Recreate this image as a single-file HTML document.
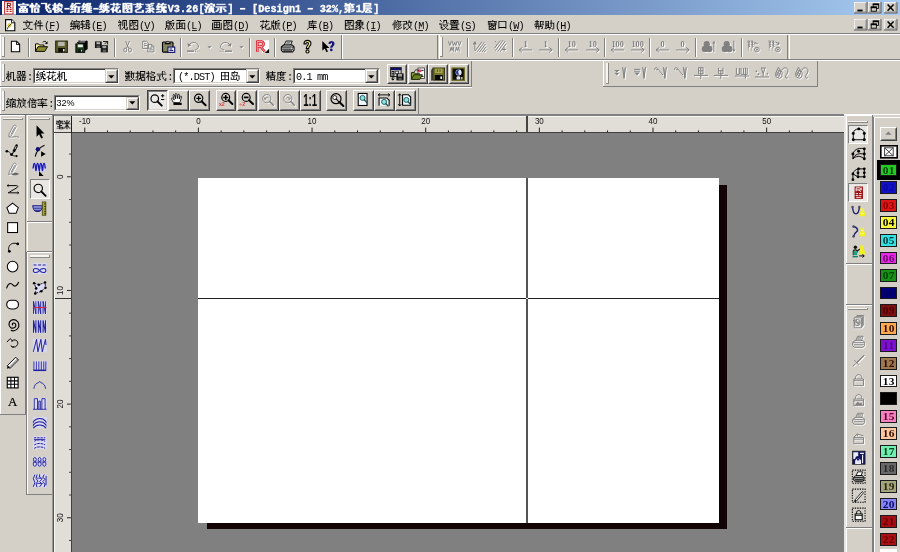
<!DOCTYPE html>
<html lang="zh"><head><meta charset="utf-8"><title>富怡飞梭-绗缝-绣花图艺系统V3.26</title>
<style>
html,body{margin:0;padding:0;background:#d4d0c8;}
body{width:900px;height:552px;overflow:hidden;position:relative;font-family:"Liberation Sans",sans-serif;}
#app{filter:blur(0.5px);position:absolute;left:0;top:0;width:900px;height:552px;overflow:hidden;}
#app div,#app svg{position:absolute;}
svg.tx{overflow:visible;font-family:"Liberation Mono",monospace;font-size:11.6px;}
svg{overflow:visible}
.lb{font-family:"Liberation Sans",sans-serif;color:#000;white-space:nowrap;line-height:1.15}
.sw{font-family:"Liberation Serif",serif;font-weight:bold;font-size:11.4px;line-height:11.6px;text-align:center;letter-spacing:0.3px}

svg.ic .s{fill:none;stroke:currentColor;stroke-width:1}
svg.ic .f{fill:currentColor;stroke:none}
</style></head>
<body>
<svg width="0" height="0" style="position:absolute"><defs>
<path id="b5bcc" d="M5 0h2v1h-2zM0 1h12v1h-12zM0 2h2v1h-2zM10 2h2v1h-2zM2 3h8v1h-8zM3 4h6v1h-6zM3 5h2v1h-2zM7 5h2v1h-2zM1 6h10v1h-10zM1 7h2v1h-2zM5 7h2v1h-2zM9 7h2v1h-2zM1 8h10v1h-10zM1 9h2v1h-2zM5 9h2v1h-2zM9 9h2v1h-2zM1 10h10v1h-10z"/>
<path id="b6021" d="M2 0h2v1h-2zM7 0h2v1h-2zM2 1h2v1h-2zM7 1h2v1h-2zM0 2h5v1h-5zM6 2h2v1h-2zM9 2h2v1h-2zM0 3h7v1h-7zM10 3h2v1h-2zM0 4h12v1h-12zM2 5h2v1h-2zM2 6h2v1h-2zM5 6h6v1h-6zM2 7h2v1h-2zM5 7h2v1h-2zM9 7h2v1h-2zM2 8h2v1h-2zM5 8h2v1h-2zM9 8h2v1h-2zM2 9h2v1h-2zM5 9h2v1h-2zM9 9h2v1h-2zM2 10h2v1h-2zM5 10h6v1h-6z"/>
<path id="b98de" d="M0 0h7v1h-7zM5 1h2v1h-2zM9 1h2v1h-2zM5 2h2v1h-2zM8 2h2v1h-2zM5 3h4v1h-4zM5 4h4v1h-4zM5 5h2v1h-2zM8 5h2v1h-2zM5 6h2v1h-2zM9 6h2v1h-2zM6 7h2v1h-2zM6 8h2v1h-2zM10 8h2v1h-2zM7 9h2v1h-2zM10 9h2v1h-2zM8 10h4v1h-4z"/>
<path id="b68ad" d="M2 0h2v1h-2zM7 0h2v1h-2zM2 1h2v1h-2zM6 1h2v1h-2zM9 1h2v1h-2zM0 2h12v1h-12zM2 3h2v1h-2zM6 3h2v1h-2zM9 3h2v1h-2zM1 4h6v1h-6zM10 4h2v1h-2zM1 5h7v1h-7zM0 6h4v1h-4zM6 6h5v1h-5zM0 7h4v1h-4zM5 7h3v1h-3zM9 7h2v1h-2zM2 8h4v1h-4zM7 8h3v1h-3zM2 9h2v1h-2zM6 9h2v1h-2zM9 9h2v1h-2zM2 10h5v1h-5zM10 10h2v1h-2z"/>
<path id="b7ed7" d="M2 0h2v1h-2zM6 0h6v1h-6zM2 1h2v1h-2zM5 1h2v1h-2zM1 2h2v1h-2zM4 2h2v1h-2zM1 3h4v1h-4zM6 3h2v1h-2zM0 4h4v1h-4zM5 4h7v1h-7zM2 5h5v1h-5zM9 5h2v1h-2zM1 6h2v1h-2zM5 6h2v1h-2zM9 6h2v1h-2zM0 7h7v1h-7zM9 7h2v1h-2zM5 8h2v1h-2zM9 8h2v1h-2zM2 9h5v1h-5zM9 9h2v1h-2zM0 10h3v1h-3zM5 10h2v1h-2zM8 10h3v1h-3z"/>
<path id="b7f1d" d="M2 0h2v1h-2zM6 0h5v1h-5zM2 1h6v1h-6zM9 1h2v1h-2zM1 2h2v1h-2zM4 2h6v1h-6zM1 3h4v1h-4zM6 3h2v1h-2zM9 3h2v1h-2zM0 4h12v1h-12zM2 5h2v1h-2zM5 5h2v1h-2zM8 5h2v1h-2zM1 6h2v1h-2zM5 6h7v1h-7zM0 7h7v1h-7zM8 7h2v1h-2zM5 8h7v1h-7zM2 9h5v1h-5zM8 9h2v1h-2zM0 10h3v1h-3zM6 10h6v1h-6z"/>
<path id="b7ee3" d="M2 0h2v1h-2zM8 0h3v1h-3zM2 1h2v1h-2zM5 1h4v1h-4zM1 2h2v1h-2zM4 2h2v1h-2zM7 2h2v1h-2zM1 3h11v1h-11zM0 4h4v1h-4zM5 4h6v1h-6zM2 5h4v1h-4zM7 5h2v1h-2zM10 5h2v1h-2zM1 6h2v1h-2zM5 6h5v1h-5zM0 7h5v1h-5zM6 7h4v1h-4zM4 8h8v1h-8zM2 9h5v1h-5zM10 9h2v1h-2zM0 10h3v1h-3zM4 10h2v1h-2zM8 10h3v1h-3z"/>
<path id="b82b1" d="M3 0h2v1h-2zM7 0h2v1h-2zM0 1h12v1h-12zM3 2h2v1h-2zM7 2h2v1h-2zM3 4h2v1h-2zM6 4h2v1h-2zM9 4h2v1h-2zM2 5h2v1h-2zM6 5h4v1h-4zM1 6h3v1h-3zM6 6h3v1h-3zM0 7h4v1h-4zM5 7h3v1h-3zM2 8h6v1h-6zM10 8h2v1h-2zM2 9h2v1h-2zM6 9h2v1h-2zM10 9h2v1h-2zM2 10h2v1h-2zM7 10h5v1h-5z"/>
<path id="b56fe" d="M1 0h11v1h-11zM1 1h2v1h-2zM4 1h2v1h-2zM10 1h2v1h-2zM1 2h2v1h-2zM4 2h8v1h-8zM1 3h5v1h-5zM7 3h2v1h-2zM10 3h2v1h-2zM1 4h3v1h-3zM5 4h3v1h-3zM10 4h2v1h-2zM1 5h2v1h-2zM4 5h2v1h-2zM7 5h2v1h-2zM10 5h2v1h-2zM1 6h6v1h-6zM8 6h4v1h-4zM1 7h2v1h-2zM6 7h2v1h-2zM10 7h2v1h-2zM1 8h2v1h-2zM5 8h2v1h-2zM10 8h2v1h-2zM1 9h2v1h-2zM6 9h2v1h-2zM10 9h2v1h-2zM1 10h11v1h-11z"/>
<path id="b827a" d="M4 0h2v1h-2zM7 0h2v1h-2zM0 1h12v1h-12zM4 2h2v1h-2zM7 2h2v1h-2zM4 3h2v1h-2zM7 3h2v1h-2zM2 4h8v1h-8zM7 5h2v1h-2zM5 6h3v1h-3zM3 7h3v1h-3zM2 8h2v1h-2zM10 8h2v1h-2zM2 9h2v1h-2zM10 9h2v1h-2zM3 10h9v1h-9z"/>
<path id="b7cfb" d="M7 0h4v1h-4zM1 1h7v1h-7zM4 2h2v1h-2zM8 2h2v1h-2zM2 3h7v1h-7zM5 4h2v1h-2zM4 5h2v1h-2zM8 5h2v1h-2zM1 6h10v1h-10zM5 7h2v1h-2zM9 7h2v1h-2zM3 8h6v1h-6zM2 9h2v1h-2zM5 9h2v1h-2zM8 9h2v1h-2zM1 10h2v1h-2zM4 10h3v1h-3zM9 10h2v1h-2z"/>
<path id="b7edf" d="M2 0h2v1h-2zM7 0h2v1h-2zM2 1h10v1h-10zM1 2h2v1h-2zM6 2h2v1h-2zM1 3h6v1h-6zM9 3h2v1h-2zM0 4h12v1h-12zM2 5h2v1h-2zM6 5h6v1h-6zM1 6h2v1h-2zM6 6h4v1h-4zM0 7h5v1h-5zM6 7h4v1h-4zM6 8h6v1h-6zM2 9h5v1h-5zM8 9h4v1h-4zM0 10h3v1h-3zM4 10h2v1h-2zM8 10h4v1h-4z"/>
<path id="b6f14" d="M1 0h2v1h-2zM7 0h2v1h-2zM2 1h10v1h-10zM4 2h2v1h-2zM10 2h2v1h-2zM0 3h2v1h-2zM3 3h9v1h-9zM1 4h4v1h-4zM7 4h2v1h-2zM2 5h2v1h-2zM5 5h6v1h-6zM2 6h2v1h-2zM5 6h6v1h-6zM0 7h3v1h-3zM5 7h6v1h-6zM1 8h2v1h-2zM5 8h6v1h-6zM1 9h2v1h-2zM5 9h6v1h-6zM1 10h2v1h-2zM4 10h3v1h-3zM9 10h3v1h-3z"/>
<path id="b793a" d="M1 1h10v1h-10zM0 4h12v1h-12zM5 5h2v1h-2zM2 6h2v1h-2zM5 6h2v1h-2zM8 6h2v1h-2zM2 7h2v1h-2zM5 7h2v1h-2zM9 7h2v1h-2zM1 8h2v1h-2zM5 8h2v1h-2zM10 8h2v1h-2zM0 9h2v1h-2zM5 9h2v1h-2zM10 9h2v1h-2zM4 10h3v1h-3z"/>
<path id="b7b2c" d="M1 0h2v1h-2zM6 0h2v1h-2zM1 1h11v1h-11zM1 2h6v1h-6zM8 2h2v1h-2zM0 3h11v1h-11zM5 4h2v1h-2zM9 4h2v1h-2zM1 5h10v1h-10zM1 6h2v1h-2zM5 6h2v1h-2zM1 7h11v1h-11zM3 8h4v1h-4zM10 8h2v1h-2zM2 9h2v1h-2zM5 9h2v1h-2zM8 9h3v1h-3zM0 10h3v1h-3zM5 10h2v1h-2z"/>
<path id="b5c42" d="M2 0h9v1h-9zM2 1h2v1h-2zM9 1h2v1h-2zM2 2h9v1h-9zM2 3h2v1h-2zM2 4h9v1h-9zM2 5h2v1h-2zM2 6h10v1h-10zM2 7h2v1h-2zM6 7h2v1h-2zM2 8h2v1h-2zM5 8h2v1h-2zM8 8h2v1h-2zM1 9h2v1h-2zM4 9h2v1h-2zM9 9h2v1h-2zM0 10h2v1h-2zM4 10h8v1h-8z"/>
<path id="g6587" d="M4 0h1v1h-1zM5 1h1v1h-1zM0 2h11v1h-11zM3 3h1v1h-1zM7 3h1v1h-1zM3 4h1v1h-1zM7 4h1v1h-1zM3 5h1v1h-1zM7 5h1v1h-1zM4 6h1v1h-1zM6 6h1v1h-1zM4 7h1v1h-1zM6 7h1v1h-1zM5 8h1v1h-1zM3 9h2v1h-2zM6 9h2v1h-2zM0 10h3v1h-3zM8 10h3v1h-3z"/>
<path id="g4ef6" d="M3 0h1v1h-1zM7 0h1v1h-1zM3 1h1v1h-1zM5 1h1v1h-1zM7 1h1v1h-1zM2 2h1v1h-1zM5 2h1v1h-1zM7 2h1v1h-1zM2 3h1v1h-1zM4 3h6v1h-6zM1 4h3v1h-3zM7 4h1v1h-1zM0 5h1v1h-1zM2 5h1v1h-1zM7 5h1v1h-1zM2 6h1v1h-1zM4 6h7v1h-7zM2 7h1v1h-1zM7 7h1v1h-1zM2 8h1v1h-1zM7 8h1v1h-1zM2 9h1v1h-1zM7 9h1v1h-1zM2 10h1v1h-1zM7 10h1v1h-1z"/>
<path id="g7f16" d="M2 0h1v1h-1zM7 0h1v1h-1zM2 1h1v1h-1zM4 1h7v1h-7zM1 2h1v1h-1zM4 2h1v1h-1zM10 2h1v1h-1zM1 3h1v1h-1zM3 3h8v1h-8zM0 4h3v1h-3zM4 4h1v1h-1zM2 5h1v1h-1zM4 5h7v1h-7zM1 6h1v1h-1zM4 6h1v1h-1zM6 6h1v1h-1zM8 6h1v1h-1zM10 6h1v1h-1zM0 7h11v1h-11zM4 8h1v1h-1zM6 8h1v1h-1zM8 8h1v1h-1zM10 8h1v1h-1zM2 9h3v1h-3zM6 9h1v1h-1zM8 9h1v1h-1zM10 9h1v1h-1zM0 10h2v1h-2zM4 10h1v1h-1zM9 10h2v1h-2z"/>
<path id="g8f91" d="M2 0h1v1h-1zM6 0h4v1h-4zM0 1h5v1h-5zM6 1h1v1h-1zM9 1h1v1h-1zM1 2h1v1h-1zM6 2h4v1h-4zM1 3h2v1h-2zM0 4h1v1h-1zM2 4h1v1h-1zM5 4h6v1h-6zM0 5h5v1h-5zM6 5h1v1h-1zM9 5h1v1h-1zM2 6h1v1h-1zM6 6h2v1h-2zM9 6h1v1h-1zM2 7h3v1h-3zM6 7h1v1h-1zM8 7h2v1h-2zM0 8h3v1h-3zM6 8h1v1h-1zM9 8h2v1h-2zM2 9h1v1h-1zM4 9h6v1h-6zM2 10h1v1h-1zM9 10h1v1h-1z"/>
<path id="g89c6" d="M1 0h1v1h-1zM5 0h5v1h-5zM2 1h1v1h-1zM5 1h1v1h-1zM9 1h1v1h-1zM0 2h4v1h-4zM5 2h1v1h-1zM7 2h1v1h-1zM9 2h1v1h-1zM3 3h1v1h-1zM5 3h1v1h-1zM7 3h1v1h-1zM9 3h1v1h-1zM2 4h1v1h-1zM5 4h1v1h-1zM7 4h1v1h-1zM9 4h1v1h-1zM1 5h3v1h-3zM5 5h1v1h-1zM7 5h1v1h-1zM9 5h1v1h-1zM0 6h1v1h-1zM2 6h1v1h-1zM5 6h1v1h-1zM7 6h1v1h-1zM9 6h1v1h-1zM2 7h1v1h-1zM7 7h1v1h-1zM2 8h1v1h-1zM6 8h2v1h-2zM10 8h1v1h-1zM2 9h1v1h-1zM5 9h1v1h-1zM7 9h1v1h-1zM10 9h1v1h-1zM2 10h1v1h-1zM4 10h1v1h-1zM8 10h3v1h-3z"/>
<path id="g56fe" d="M1 0h10v1h-10zM1 1h1v1h-1zM4 1h1v1h-1zM10 1h1v1h-1zM1 2h1v1h-1zM4 2h5v1h-5zM10 2h1v1h-1zM1 3h1v1h-1zM3 3h2v1h-2zM7 3h1v1h-1zM10 3h1v1h-1zM1 4h2v1h-2zM5 4h2v1h-2zM10 4h1v1h-1zM1 5h1v1h-1zM4 5h1v1h-1zM7 5h1v1h-1zM10 5h1v1h-1zM1 6h3v1h-3zM5 6h1v1h-1zM8 6h3v1h-3zM1 7h1v1h-1zM6 7h1v1h-1zM10 7h1v1h-1zM1 8h1v1h-1zM5 8h1v1h-1zM10 8h1v1h-1zM1 9h1v1h-1zM6 9h1v1h-1zM10 9h1v1h-1zM1 10h10v1h-10z"/>
<path id="g7248" d="M3 0h1v1h-1zM8 0h2v1h-2zM1 1h1v1h-1zM3 1h1v1h-1zM5 1h3v1h-3zM1 2h1v1h-1zM3 2h1v1h-1zM5 2h1v1h-1zM1 3h10v1h-10zM1 4h1v1h-1zM5 4h2v1h-2zM9 4h1v1h-1zM1 5h1v1h-1zM5 5h1v1h-1zM7 5h1v1h-1zM9 5h1v1h-1zM1 6h3v1h-3zM5 6h1v1h-1zM7 6h1v1h-1zM9 6h1v1h-1zM1 7h1v1h-1zM3 7h1v1h-1zM5 7h1v1h-1zM8 7h1v1h-1zM1 8h1v1h-1zM3 8h1v1h-1zM5 8h1v1h-1zM8 8h1v1h-1zM0 9h1v1h-1zM3 9h1v1h-1zM5 9h1v1h-1zM7 9h1v1h-1zM9 9h1v1h-1zM0 10h1v1h-1zM3 10h2v1h-2zM6 10h1v1h-1zM10 10h1v1h-1z"/>
<path id="g9762" d="M1 0h10v1h-10zM5 1h1v1h-1zM4 2h1v1h-1zM1 3h10v1h-10zM1 4h1v1h-1zM4 4h1v1h-1zM7 4h1v1h-1zM10 4h1v1h-1zM1 5h1v1h-1zM4 5h4v1h-4zM10 5h1v1h-1zM1 6h1v1h-1zM4 6h1v1h-1zM7 6h1v1h-1zM10 6h1v1h-1zM1 7h1v1h-1zM4 7h4v1h-4zM10 7h1v1h-1zM1 8h1v1h-1zM4 8h1v1h-1zM7 8h1v1h-1zM10 8h1v1h-1zM1 9h10v1h-10zM1 10h1v1h-1zM10 10h1v1h-1z"/>
<path id="g753b" d="M0 0h11v1h-11zM2 2h7v1h-7zM0 3h1v1h-1zM2 3h1v1h-1zM5 3h1v1h-1zM8 3h1v1h-1zM10 3h1v1h-1zM0 4h1v1h-1zM2 4h1v1h-1zM5 4h1v1h-1zM8 4h1v1h-1zM10 4h1v1h-1zM0 5h1v1h-1zM2 5h7v1h-7zM10 5h1v1h-1zM0 6h1v1h-1zM2 6h1v1h-1zM5 6h1v1h-1zM8 6h1v1h-1zM10 6h1v1h-1zM0 7h1v1h-1zM2 7h1v1h-1zM5 7h1v1h-1zM8 7h1v1h-1zM10 7h1v1h-1zM0 8h1v1h-1zM2 8h7v1h-7zM10 8h1v1h-1zM0 9h1v1h-1zM10 9h1v1h-1zM0 10h11v1h-11z"/>
<path id="g82b1" d="M3 0h1v1h-1zM7 0h1v1h-1zM0 1h11v1h-11zM3 2h1v1h-1zM7 2h1v1h-1zM3 4h1v1h-1zM6 4h1v1h-1zM9 4h1v1h-1zM2 5h1v1h-1zM6 5h1v1h-1zM8 5h1v1h-1zM1 6h2v1h-2zM6 6h2v1h-2zM0 7h1v1h-1zM2 7h1v1h-1zM5 7h2v1h-2zM2 8h3v1h-3zM6 8h1v1h-1zM10 8h1v1h-1zM2 9h1v1h-1zM6 9h1v1h-1zM10 9h1v1h-1zM2 10h1v1h-1zM7 10h4v1h-4z"/>
<path id="g5e93" d="M6 0h1v1h-1zM2 1h9v1h-9zM2 2h1v1h-1zM6 2h1v1h-1zM2 3h9v1h-9zM2 4h1v1h-1zM5 4h1v1h-1zM2 5h1v1h-1zM4 5h1v1h-1zM7 5h1v1h-1zM2 6h1v1h-1zM4 6h6v1h-6zM2 7h1v1h-1zM7 7h1v1h-1zM2 8h9v1h-9zM1 9h1v1h-1zM7 9h1v1h-1zM0 10h1v1h-1zM7 10h1v1h-1z"/>
<path id="g8c61" d="M3 0h5v1h-5zM2 1h1v1h-1zM6 1h1v1h-1zM1 2h9v1h-9zM0 3h1v1h-1zM2 3h1v1h-1zM5 3h1v1h-1zM9 3h1v1h-1zM2 4h8v1h-8zM3 5h1v1h-1zM5 5h1v1h-1zM9 5h1v1h-1zM1 6h2v1h-2zM4 6h3v1h-3zM8 6h1v1h-1zM3 7h1v1h-1zM6 7h2v1h-2zM1 8h2v1h-2zM5 8h2v1h-2zM8 8h1v1h-1zM3 9h2v1h-2zM6 9h1v1h-1zM9 9h2v1h-2zM0 10h3v1h-3zM5 10h2v1h-2z"/>
<path id="g4fee" d="M3 0h1v1h-1zM6 0h1v1h-1zM3 1h1v1h-1zM6 1h5v1h-5zM2 2h1v1h-1zM4 2h2v1h-2zM7 2h1v1h-1zM9 2h1v1h-1zM2 3h1v1h-1zM4 3h1v1h-1zM8 3h1v1h-1zM1 4h2v1h-2zM4 4h1v1h-1zM6 4h2v1h-2zM9 4h1v1h-1zM0 5h1v1h-1zM2 5h1v1h-1zM4 5h2v1h-2zM8 5h1v1h-1zM10 5h1v1h-1zM2 6h1v1h-1zM4 6h1v1h-1zM7 6h1v1h-1zM9 6h1v1h-1zM2 7h1v1h-1zM4 7h1v1h-1zM6 7h1v1h-1zM8 7h1v1h-1zM2 8h1v1h-1zM4 8h1v1h-1zM7 8h1v1h-1zM10 8h1v1h-1zM2 9h1v1h-1zM8 9h2v1h-2zM2 10h1v1h-1zM5 10h3v1h-3z"/>
<path id="g6539" d="M7 0h1v1h-1zM0 1h5v1h-5zM7 1h1v1h-1zM4 2h1v1h-1zM6 2h5v1h-5zM4 3h2v1h-2zM9 3h1v1h-1zM1 4h4v1h-4zM6 4h1v1h-1zM9 4h1v1h-1zM1 5h1v1h-1zM6 5h1v1h-1zM9 5h1v1h-1zM1 6h1v1h-1zM6 6h1v1h-1zM9 6h1v1h-1zM1 7h1v1h-1zM7 7h2v1h-2zM1 8h1v1h-1zM3 8h1v1h-1zM7 8h2v1h-2zM1 9h2v1h-2zM6 9h1v1h-1zM9 9h1v1h-1zM1 10h1v1h-1zM4 10h2v1h-2zM10 10h1v1h-1z"/>
<path id="g8bbe" d="M1 0h1v1h-1zM5 0h4v1h-4zM2 1h1v1h-1zM5 1h1v1h-1zM8 1h1v1h-1zM5 2h1v1h-1zM8 2h1v1h-1zM4 3h1v1h-1zM8 3h3v1h-3zM0 4h3v1h-3zM2 5h1v1h-1zM4 5h6v1h-6zM2 6h1v1h-1zM5 6h1v1h-1zM9 6h1v1h-1zM2 7h1v1h-1zM6 7h1v1h-1zM8 7h1v1h-1zM2 8h2v1h-2zM7 8h1v1h-1zM2 9h1v1h-1zM6 9h1v1h-1zM8 9h1v1h-1zM3 10h3v1h-3zM9 10h2v1h-2z"/>
<path id="g7f6e" d="M1 0h9v1h-9zM1 1h1v1h-1zM4 1h1v1h-1zM6 1h1v1h-1zM9 1h1v1h-1zM1 2h9v1h-9zM5 3h1v1h-1zM0 4h11v1h-11zM2 5h1v1h-1zM8 5h1v1h-1zM2 6h7v1h-7zM2 7h1v1h-1zM8 7h1v1h-1zM2 8h7v1h-7zM2 9h1v1h-1zM8 9h1v1h-1zM0 10h11v1h-11z"/>
<path id="g7a97" d="M6 0h1v1h-1zM1 1h10v1h-10zM1 2h1v1h-1zM3 2h1v1h-1zM8 2h1v1h-1zM10 2h1v1h-1zM2 3h1v1h-1zM5 3h1v1h-1zM9 3h1v1h-1zM1 4h10v1h-10zM2 5h1v1h-1zM5 5h1v1h-1zM9 5h1v1h-1zM2 6h1v1h-1zM4 6h6v1h-6zM2 7h3v1h-3zM7 7h1v1h-1zM9 7h1v1h-1zM2 8h1v1h-1zM5 8h2v1h-2zM9 8h1v1h-1zM2 9h1v1h-1zM4 9h1v1h-1zM7 9h1v1h-1zM9 9h1v1h-1zM2 10h8v1h-8z"/>
<path id="g53e3" d="M1 1h9v1h-9zM1 2h1v1h-1zM9 2h1v1h-1zM1 3h1v1h-1zM9 3h1v1h-1zM1 4h1v1h-1zM9 4h1v1h-1zM1 5h1v1h-1zM9 5h1v1h-1zM1 6h1v1h-1zM9 6h1v1h-1zM1 7h1v1h-1zM9 7h1v1h-1zM1 8h9v1h-9zM1 9h1v1h-1zM9 9h1v1h-1z"/>
<path id="g5e2e" d="M3 0h1v1h-1zM1 1h5v1h-5zM7 1h4v1h-4zM3 2h1v1h-1zM7 2h1v1h-1zM10 2h1v1h-1zM1 3h5v1h-5zM7 3h1v1h-1zM9 3h1v1h-1zM3 4h1v1h-1zM7 4h1v1h-1zM10 4h1v1h-1zM0 5h6v1h-6zM7 5h4v1h-4zM2 6h1v1h-1zM5 6h1v1h-1zM7 6h1v1h-1zM1 7h9v1h-9zM2 8h1v1h-1zM5 8h1v1h-1zM9 8h1v1h-1zM2 9h1v1h-1zM5 9h1v1h-1zM8 9h2v1h-2zM5 10h1v1h-1z"/>
<path id="g52a9" d="M7 0h1v1h-1zM1 1h4v1h-4zM7 1h1v1h-1zM1 2h1v1h-1zM4 2h1v1h-1zM7 2h1v1h-1zM1 3h1v1h-1zM4 3h1v1h-1zM6 3h5v1h-5zM1 4h4v1h-4zM7 4h1v1h-1zM10 4h1v1h-1zM1 5h1v1h-1zM4 5h1v1h-1zM7 5h1v1h-1zM10 5h1v1h-1zM1 6h4v1h-4zM7 6h1v1h-1zM10 6h1v1h-1zM1 7h1v1h-1zM4 7h1v1h-1zM7 7h1v1h-1zM10 7h1v1h-1zM1 8h1v1h-1zM3 8h4v1h-4zM10 8h1v1h-1zM0 9h3v1h-3zM6 9h1v1h-1zM8 9h1v1h-1zM10 9h1v1h-1zM5 10h1v1h-1zM9 10h1v1h-1z"/>
<path id="g673a" d="M2 0h1v1h-1zM2 1h1v1h-1zM5 1h4v1h-4zM2 2h1v1h-1zM5 2h1v1h-1zM8 2h1v1h-1zM0 3h6v1h-6zM8 3h1v1h-1zM2 4h1v1h-1zM5 4h1v1h-1zM8 4h1v1h-1zM1 5h3v1h-3zM5 5h1v1h-1zM8 5h1v1h-1zM1 6h2v1h-2zM4 6h2v1h-2zM8 6h1v1h-1zM0 7h1v1h-1zM2 7h1v1h-1zM5 7h1v1h-1zM8 7h1v1h-1zM0 8h1v1h-1zM2 8h1v1h-1zM5 8h1v1h-1zM8 8h1v1h-1zM2 9h1v1h-1zM4 9h1v1h-1zM8 9h1v1h-1zM10 9h1v1h-1zM2 10h2v1h-2zM8 10h3v1h-3z"/>
<path id="g5668" d="M1 0h4v1h-4zM6 0h4v1h-4zM1 1h1v1h-1zM4 1h1v1h-1zM6 1h1v1h-1zM9 1h1v1h-1zM1 2h1v1h-1zM4 2h1v1h-1zM6 2h1v1h-1zM9 2h1v1h-1zM1 3h4v1h-4zM6 3h4v1h-4zM5 4h1v1h-1zM8 4h1v1h-1zM0 5h11v1h-11zM3 6h1v1h-1zM7 6h1v1h-1zM0 7h5v1h-5zM6 7h5v1h-5zM1 8h1v1h-1zM4 8h1v1h-1zM6 8h1v1h-1zM9 8h1v1h-1zM1 9h1v1h-1zM4 9h1v1h-1zM6 9h1v1h-1zM9 9h1v1h-1zM1 10h4v1h-4zM6 10h4v1h-4z"/>
<path id="g7ee3" d="M2 0h1v1h-1zM8 0h2v1h-2zM2 1h1v1h-1zM5 1h3v1h-3zM1 2h1v1h-1zM4 2h1v1h-1zM7 2h1v1h-1zM1 3h1v1h-1zM3 3h1v1h-1zM5 3h6v1h-6zM0 4h3v1h-3zM5 4h1v1h-1zM7 4h1v1h-1zM9 4h1v1h-1zM2 5h1v1h-1zM4 5h1v1h-1zM7 5h1v1h-1zM10 5h1v1h-1zM1 6h1v1h-1zM5 6h4v1h-4zM0 7h4v1h-4zM6 7h1v1h-1zM8 7h1v1h-1zM4 8h1v1h-1zM6 8h1v1h-1zM8 8h3v1h-3zM2 9h2v1h-2zM5 9h1v1h-1zM10 9h1v1h-1zM0 10h2v1h-2zM4 10h1v1h-1zM8 10h2v1h-2z"/>
<path id="g6570" d="M0 0h1v1h-1zM3 0h1v1h-1zM5 0h1v1h-1zM7 0h1v1h-1zM1 1h1v1h-1zM3 1h2v1h-2zM7 1h1v1h-1zM0 2h6v1h-6zM7 2h4v1h-4zM2 3h2v1h-2zM6 3h2v1h-2zM9 3h1v1h-1zM1 4h1v1h-1zM3 4h2v1h-2zM7 4h1v1h-1zM9 4h1v1h-1zM0 5h1v1h-1zM3 5h1v1h-1zM5 5h1v1h-1zM7 5h1v1h-1zM9 5h1v1h-1zM0 6h6v1h-6zM7 6h1v1h-1zM9 6h1v1h-1zM2 7h1v1h-1zM4 7h1v1h-1zM7 7h1v1h-1zM9 7h1v1h-1zM1 8h2v1h-2zM4 8h1v1h-1zM8 8h1v1h-1zM3 9h1v1h-1zM7 9h1v1h-1zM9 9h1v1h-1zM0 10h3v1h-3zM4 10h3v1h-3zM10 10h1v1h-1z"/>
<path id="g636e" d="M2 0h1v1h-1zM5 0h6v1h-6zM2 1h1v1h-1zM5 1h1v1h-1zM10 1h1v1h-1zM0 2h6v1h-6zM10 2h1v1h-1zM2 3h1v1h-1zM5 3h6v1h-6zM2 4h1v1h-1zM4 4h2v1h-2zM8 4h1v1h-1zM2 5h2v1h-2zM5 5h6v1h-6zM1 6h2v1h-2zM5 6h1v1h-1zM8 6h1v1h-1zM0 7h1v1h-1zM2 7h1v1h-1zM5 7h6v1h-6zM2 8h1v1h-1zM4 8h3v1h-3zM10 8h1v1h-1zM0 9h1v1h-1zM2 9h1v1h-1zM4 9h1v1h-1zM6 9h1v1h-1zM10 9h1v1h-1zM1 10h1v1h-1zM3 10h1v1h-1zM6 10h5v1h-5z"/>
<path id="g683c" d="M2 0h1v1h-1zM6 0h1v1h-1zM2 1h1v1h-1zM6 1h4v1h-4zM0 2h4v1h-4zM5 2h1v1h-1zM9 2h1v1h-1zM2 3h1v1h-1zM4 3h1v1h-1zM6 3h1v1h-1zM8 3h1v1h-1zM2 4h1v1h-1zM7 4h1v1h-1zM1 5h3v1h-3zM6 5h1v1h-1zM8 5h1v1h-1zM1 6h2v1h-2zM4 6h2v1h-2zM9 6h2v1h-2zM0 7h1v1h-1zM2 7h1v1h-1zM5 7h5v1h-5zM2 8h1v1h-1zM5 8h1v1h-1zM9 8h1v1h-1zM2 9h1v1h-1zM5 9h1v1h-1zM9 9h1v1h-1zM2 10h1v1h-1zM5 10h5v1h-5z"/>
<path id="g5f0f" d="M6 0h1v1h-1zM8 0h1v1h-1zM6 1h1v1h-1zM9 1h1v1h-1zM6 2h1v1h-1zM0 3h11v1h-11zM6 4h1v1h-1zM1 5h4v1h-4zM6 5h1v1h-1zM3 6h1v1h-1zM6 6h1v1h-1zM3 7h1v1h-1zM7 7h1v1h-1zM3 8h1v1h-1zM7 8h1v1h-1zM10 8h1v1h-1zM3 9h2v1h-2zM8 9h1v1h-1zM10 9h1v1h-1zM0 10h3v1h-3zM9 10h2v1h-2z"/>
<path id="g7530" d="M1 1h9v1h-9zM1 2h1v1h-1zM5 2h1v1h-1zM9 2h1v1h-1zM1 3h1v1h-1zM5 3h1v1h-1zM9 3h1v1h-1zM1 4h1v1h-1zM5 4h1v1h-1zM9 4h1v1h-1zM1 5h9v1h-9zM1 6h1v1h-1zM5 6h1v1h-1zM9 6h1v1h-1zM1 7h1v1h-1zM5 7h1v1h-1zM9 7h1v1h-1zM1 8h1v1h-1zM5 8h1v1h-1zM9 8h1v1h-1zM1 9h9v1h-9zM1 10h1v1h-1zM9 10h1v1h-1z"/>
<path id="g5c9b" d="M4 0h1v1h-1zM1 1h7v1h-7zM1 2h1v1h-1zM3 2h1v1h-1zM7 2h1v1h-1zM1 3h1v1h-1zM4 3h1v1h-1zM7 3h1v1h-1zM1 4h1v1h-1zM6 4h1v1h-1zM1 5h9v1h-9zM3 6h1v1h-1zM9 6h1v1h-1zM0 7h1v1h-1zM3 7h1v1h-1zM6 7h1v1h-1zM9 7h1v1h-1zM0 8h1v1h-1zM3 8h1v1h-1zM6 8h1v1h-1zM9 8h1v1h-1zM0 9h7v1h-7zM9 9h1v1h-1zM7 10h2v1h-2z"/>
<path id="g7cbe" d="M2 0h1v1h-1zM7 0h1v1h-1zM0 1h1v1h-1zM2 1h1v1h-1zM4 1h7v1h-7zM1 2h3v1h-3zM7 2h1v1h-1zM2 3h1v1h-1zM5 3h5v1h-5zM0 4h4v1h-4zM7 4h1v1h-1zM2 5h1v1h-1zM4 5h7v1h-7zM1 6h3v1h-3zM5 6h1v1h-1zM9 6h1v1h-1zM1 7h2v1h-2zM4 7h6v1h-6zM0 8h1v1h-1zM2 8h1v1h-1zM5 8h1v1h-1zM9 8h1v1h-1zM2 9h1v1h-1zM5 9h5v1h-5zM2 10h1v1h-1zM5 10h1v1h-1zM9 10h1v1h-1z"/>
<path id="g5ea6" d="M5 0h1v1h-1zM1 1h10v1h-10zM1 2h1v1h-1zM4 2h1v1h-1zM7 2h1v1h-1zM1 3h9v1h-9zM1 4h1v1h-1zM4 4h1v1h-1zM7 4h1v1h-1zM1 5h1v1h-1zM4 5h4v1h-4zM1 6h1v1h-1zM1 7h1v1h-1zM3 7h6v1h-6zM1 8h1v1h-1zM4 8h1v1h-1zM7 8h1v1h-1zM0 9h1v1h-1zM5 9h2v1h-2zM0 10h1v1h-1zM2 10h3v1h-3zM7 10h3v1h-3z"/>
<path id="g7f29" d="M2 0h1v1h-1zM7 0h1v1h-1zM2 1h1v1h-1zM4 1h7v1h-7zM1 2h1v1h-1zM4 2h1v1h-1zM6 2h1v1h-1zM10 2h1v1h-1zM1 3h1v1h-1zM3 3h1v1h-1zM5 3h1v1h-1zM7 3h4v1h-4zM0 4h3v1h-3zM5 4h1v1h-1zM8 4h1v1h-1zM2 5h1v1h-1zM4 5h2v1h-2zM7 5h4v1h-4zM1 6h1v1h-1zM5 6h1v1h-1zM7 6h1v1h-1zM10 6h1v1h-1zM0 7h4v1h-4zM5 7h1v1h-1zM7 7h4v1h-4zM4 8h2v1h-2zM7 8h1v1h-1zM10 8h1v1h-1zM2 9h2v1h-2zM5 9h1v1h-1zM7 9h4v1h-4zM0 10h2v1h-2zM5 10h1v1h-1zM7 10h1v1h-1zM10 10h1v1h-1z"/>
<path id="g653e" d="M2 0h1v1h-1zM7 0h1v1h-1zM3 1h1v1h-1zM7 1h1v1h-1zM0 2h6v1h-6zM7 2h4v1h-4zM2 3h1v1h-1zM6 3h1v1h-1zM9 3h1v1h-1zM2 4h1v1h-1zM5 4h1v1h-1zM7 4h1v1h-1zM9 4h1v1h-1zM2 5h3v1h-3zM7 5h1v1h-1zM9 5h1v1h-1zM2 6h1v1h-1zM4 6h1v1h-1zM7 6h1v1h-1zM9 6h1v1h-1zM2 7h1v1h-1zM4 7h1v1h-1zM8 7h1v1h-1zM1 8h1v1h-1zM4 8h1v1h-1zM7 8h2v1h-2zM1 9h1v1h-1zM4 9h1v1h-1zM6 9h1v1h-1zM9 9h1v1h-1zM0 10h1v1h-1zM3 10h1v1h-1zM5 10h1v1h-1zM10 10h1v1h-1z"/>
<path id="g500d" d="M3 0h1v1h-1zM6 0h1v1h-1zM3 1h1v1h-1zM7 1h1v1h-1zM2 2h1v1h-1zM4 2h7v1h-7zM2 3h1v1h-1zM5 3h1v1h-1zM9 3h1v1h-1zM1 4h2v1h-2zM6 4h1v1h-1zM8 4h1v1h-1zM0 5h1v1h-1zM2 5h1v1h-1zM4 5h7v1h-7zM2 6h1v1h-1zM2 7h1v1h-1zM5 7h5v1h-5zM2 8h1v1h-1zM5 8h1v1h-1zM9 8h1v1h-1zM2 9h1v1h-1zM5 9h1v1h-1zM9 9h1v1h-1zM2 10h1v1h-1zM5 10h5v1h-5z"/>
<path id="g7387" d="M5 0h1v1h-1zM0 1h11v1h-11zM0 2h1v1h-1zM4 2h1v1h-1zM9 2h1v1h-1zM1 3h1v1h-1zM3 3h1v1h-1zM6 3h1v1h-1zM8 3h1v1h-1zM4 4h2v1h-2zM2 5h1v1h-1zM4 5h1v1h-1zM6 5h1v1h-1zM8 5h1v1h-1zM0 6h2v1h-2zM3 6h5v1h-5zM9 6h1v1h-1zM5 7h1v1h-1zM0 8h11v1h-11zM5 9h1v1h-1zM5 10h1v1h-1z"/>
<path id="b6beb" d="M5 0h2v1h-2zM0 1h12v1h-12zM3 2h2v1h-2zM7 2h2v1h-2zM0 3h12v1h-12zM0 4h2v1h-2zM6 4h2v1h-2zM10 4h2v1h-2zM2 5h5v1h-5zM5 6h5v1h-5zM2 7h5v1h-5zM5 8h7v1h-7zM1 9h6v1h-6zM10 9h2v1h-2zM5 10h7v1h-7z"/>
<path id="b7c73" d="M5 0h2v1h-2zM1 1h2v1h-2zM5 1h2v1h-2zM9 1h2v1h-2zM2 2h2v1h-2zM5 2h2v1h-2zM8 2h2v1h-2zM3 3h6v1h-6zM0 4h12v1h-12zM5 5h2v1h-2zM4 6h4v1h-4zM3 7h6v1h-6zM2 8h2v1h-2zM5 8h2v1h-2zM8 8h2v1h-2zM0 9h3v1h-3zM5 9h2v1h-2zM9 9h3v1h-3zM5 10h2v1h-2z"/>
</defs></svg>
<div id="app">
<div style="left:0.00px;top:0.00px;width:900.00px;height:15.20px;background:linear-gradient(90deg,#0a246a 0%,#a6caf0 100%)"></div>
<svg class="ab" style="left:2px;top:1.3px" width="14" height="13.6" viewBox="0 0 14 13.6"><rect width="14" height="13.6" fill="#fff"/><rect x="2.6" y="0.6" width="8.4" height="12.4" fill="#fff" stroke="#c23a3a" stroke-width="1.1"/><path d="M4.7 2.3h2.6c2 0 2 2.3 0 2.3H5.3M5.4 2.3v4.5M4.5 6.8h1.9M7 4.6l1.7 2.2h.8" fill="none" stroke="#8a1010" stroke-width="1.05"/><path d="M4.4 8.4h2.2M7.4 8.4h2.2M4.4 10.4h2M7.6 10.4h2" stroke="#c02020" stroke-width="1.3"/></svg>
<svg class="tx" role="img" aria-label="富怡飞梭-绗缝-绣花图艺系统V3.26[演示] - [Design1 - 32%,第1层]" style="left:17.60px;top:2.70px" width="361.23" height="12.30" viewBox="0 0 411 14" fill="#fff" font-weight="bold" stroke="#fff" stroke-width="0.35"><use href="#b5bcc" x="0"/><use href="#b6021" x="13"/><use href="#b98de" x="26"/><use href="#b68ad" x="39"/><rect x="52.6" y="5.6" width="6.0" height="1.9" stroke="none"/><text x="52.3" y="10" xml:space="preserve"> </text><use href="#b7ed7" x="59"/><use href="#b7f1d" x="72"/><rect x="85.6" y="5.6" width="6.0" height="1.9" stroke="none"/><text x="85.3" y="10" xml:space="preserve"> </text><use href="#b7ee3" x="92"/><use href="#b82b1" x="105"/><use href="#b56fe" x="118"/><use href="#b827a" x="131"/><use href="#b7cfb" x="144"/><use href="#b7edf" x="157"/><text x="170.3 177.3 184.3 191.3 198.3 205.3" y="10" xml:space="preserve">V3.26[</text><use href="#b6f14" x="212"/><use href="#b793a" x="225"/><rect x="252.6" y="5.6" width="6.0" height="1.9" stroke="none"/><rect x="329.6" y="5.6" width="6.0" height="1.9" stroke="none"/><text x="238.3 245.3 252.3 259.3 266.3 273.3 280.3 287.3 294.3 301.3 308.3 315.3 322.3 329.3 336.3 343.3 350.3 357.3 364.3" y="10" xml:space="preserve">]   [Design1   32%,</text><use href="#b7b2c" x="371"/><text x="384.3" y="10" xml:space="preserve">1</text><use href="#b5c42" x="391"/><text x="404.3" y="10" xml:space="preserve">]</text></svg>
<svg class="ab" style="left:854.1px;top:2.1px" width="13.4" height="11.4" viewBox="0 0 13.4 11.4"><rect width="13.4" height="11.4" fill="#404040"/><rect width="12.5" height="10.5" fill="#fff"/><rect x="0.9" y="0.9" width="11.6" height="9.6" fill="#808080"/><rect x="0.9" y="0.9" width="10.7" height="8.7" fill="#d4d0c8"/><rect x="3.4" y="7.6" width="5.2" height="1.8" fill="#000"/></svg>
<svg class="ab" style="left:867.6px;top:2.1px" width="13.4" height="11.4" viewBox="0 0 13.4 11.4"><rect width="13.4" height="11.4" fill="#404040"/><rect width="12.5" height="10.5" fill="#fff"/><rect x="0.9" y="0.9" width="11.6" height="9.6" fill="#808080"/><rect x="0.9" y="0.9" width="10.7" height="8.7" fill="#d4d0c8"/><rect x="5.2" y="2" width="5.2" height="4.4" fill="none" stroke="#000" stroke-width="0.9"/><rect x="4.8" y="1.6" width="6" height="1.6" fill="#000"/><rect x="3.2" y="5" width="5.2" height="4.2" fill="#d4d0c8" stroke="#000" stroke-width="0.9"/><rect x="2.8" y="4.6" width="6" height="1.6" fill="#000"/></svg>
<svg class="ab" style="left:884.3px;top:2.1px" width="13.4" height="11.4" viewBox="0 0 13.4 11.4"><rect width="13.4" height="11.4" fill="#404040"/><rect width="12.5" height="10.5" fill="#fff"/><rect x="0.9" y="0.9" width="11.6" height="9.6" fill="#808080"/><rect x="0.9" y="0.9" width="10.7" height="8.7" fill="#d4d0c8"/><path d="M3.6 2.6l6 6.2M9.6 2.6l-6 6.2" stroke="#000" stroke-width="1.5"/></svg>
<svg class="ab" style="left:854.1px;top:18.6px" width="13.4" height="11.4" viewBox="0 0 13.4 11.4"><rect width="13.4" height="11.4" fill="#404040"/><rect width="12.5" height="10.5" fill="#fff"/><rect x="0.9" y="0.9" width="11.6" height="9.6" fill="#808080"/><rect x="0.9" y="0.9" width="10.7" height="8.7" fill="#d4d0c8"/><rect x="3.4" y="7.6" width="5.2" height="1.8" fill="#000"/></svg>
<svg class="ab" style="left:867.6px;top:18.6px" width="13.4" height="11.4" viewBox="0 0 13.4 11.4"><rect width="13.4" height="11.4" fill="#404040"/><rect width="12.5" height="10.5" fill="#fff"/><rect x="0.9" y="0.9" width="11.6" height="9.6" fill="#808080"/><rect x="0.9" y="0.9" width="10.7" height="8.7" fill="#d4d0c8"/><rect x="5.2" y="2" width="5.2" height="4.4" fill="none" stroke="#000" stroke-width="0.9"/><rect x="4.8" y="1.6" width="6" height="1.6" fill="#000"/><rect x="3.2" y="5" width="5.2" height="4.2" fill="#d4d0c8" stroke="#000" stroke-width="0.9"/><rect x="2.8" y="4.6" width="6" height="1.6" fill="#000"/></svg>
<svg class="ab" style="left:884.3px;top:18.6px" width="13.4" height="11.4" viewBox="0 0 13.4 11.4"><rect width="13.4" height="11.4" fill="#404040"/><rect width="12.5" height="10.5" fill="#fff"/><rect x="0.9" y="0.9" width="11.6" height="9.6" fill="#808080"/><rect x="0.9" y="0.9" width="10.7" height="8.7" fill="#d4d0c8"/><path d="M3.6 2.6l6 6.2M9.6 2.6l-6 6.2" stroke="#000" stroke-width="1.5"/></svg>
<svg class="ab" style="left:5px;top:18.6px" width="10.4" height="12.4" viewBox="0 0 10.4 12.4"><path d="M0.6 0.6h6l3.2 3.2v8H0.6z" fill="#fff" stroke="#000" stroke-width="1.1"/><path d="M6.6 0.6v3.2h3.2" fill="#fff" stroke="#000" stroke-width="0.9"/><path d="M2 6.2l2.4-2.6 2.6 2.4-2.6 3z" fill="#e8d040"/><path d="M2.2 10.4l1-2.4 3.4-3.6" stroke="#404000" stroke-width="1" fill="none"/></svg>
<svg class="tx" role="img" aria-label="文件(F)" style="left:22.60px;top:19.60px" width="36.91" height="12.30" viewBox="0 0 42 14" fill="#000" font-weight="normal"><use href="#g6587" x="0"/><use href="#g4ef6" x="12"/><text x="24 30 36" y="10" xml:space="preserve">(F)</text></svg>
<div style="left:49.27px;top:30.20px;width:5.00px;height:0.90px;background:#222"></div>
<svg class="tx" role="img" aria-label="编辑(E)" style="left:70.06px;top:19.60px" width="36.91" height="12.30" viewBox="0 0 42 14" fill="#000" font-weight="normal"><use href="#g7f16" x="0"/><use href="#g8f91" x="12"/><text x="24 30 36" y="10" xml:space="preserve">(E)</text></svg>
<div style="left:96.73px;top:30.20px;width:5.00px;height:0.90px;background:#222"></div>
<svg class="tx" role="img" aria-label="视图(V)" style="left:117.52px;top:19.60px" width="36.91" height="12.30" viewBox="0 0 42 14" fill="#000" font-weight="normal"><use href="#g89c6" x="0"/><use href="#g56fe" x="12"/><text x="24 30 36" y="10" xml:space="preserve">(V)</text></svg>
<div style="left:144.19px;top:30.20px;width:5.00px;height:0.90px;background:#222"></div>
<svg class="tx" role="img" aria-label="版面(L)" style="left:164.98px;top:19.60px" width="36.91" height="12.30" viewBox="0 0 42 14" fill="#000" font-weight="normal"><use href="#g7248" x="0"/><use href="#g9762" x="12"/><text x="24 30 36" y="10" xml:space="preserve">(L)</text></svg>
<div style="left:191.65px;top:30.20px;width:5.00px;height:0.90px;background:#222"></div>
<svg class="tx" role="img" aria-label="画图(D)" style="left:212.44px;top:19.60px" width="36.91" height="12.30" viewBox="0 0 42 14" fill="#000" font-weight="normal"><use href="#g753b" x="0"/><use href="#g56fe" x="12"/><text x="24 30 36" y="10" xml:space="preserve">(D)</text></svg>
<div style="left:239.11px;top:30.20px;width:5.00px;height:0.90px;background:#222"></div>
<svg class="tx" role="img" aria-label="花版(P)" style="left:259.90px;top:19.60px" width="36.91" height="12.30" viewBox="0 0 42 14" fill="#000" font-weight="normal"><use href="#g82b1" x="0"/><use href="#g7248" x="12"/><text x="24 30 36" y="10" xml:space="preserve">(P)</text></svg>
<div style="left:286.57px;top:30.20px;width:5.00px;height:0.90px;background:#222"></div>
<svg class="tx" role="img" aria-label="库(B)" style="left:307.37px;top:19.60px" width="26.37" height="12.30" viewBox="0 0 30 14" fill="#000" font-weight="normal"><use href="#g5e93" x="0"/><text x="12 18 24" y="10" xml:space="preserve">(B)</text></svg>
<div style="left:323.49px;top:30.20px;width:5.00px;height:0.90px;background:#222"></div>
<svg class="tx" role="img" aria-label="图象(I)" style="left:344.28px;top:19.60px" width="36.91" height="12.30" viewBox="0 0 42 14" fill="#000" font-weight="normal"><use href="#g56fe" x="0"/><use href="#g8c61" x="12"/><text x="24 30 36" y="10" xml:space="preserve">(I)</text></svg>
<div style="left:370.95px;top:30.20px;width:5.00px;height:0.90px;background:#222"></div>
<svg class="tx" role="img" aria-label="修改(M)" style="left:391.74px;top:19.60px" width="36.91" height="12.30" viewBox="0 0 42 14" fill="#000" font-weight="normal"><use href="#g4fee" x="0"/><use href="#g6539" x="12"/><text x="24 30 36" y="10" xml:space="preserve">(M)</text></svg>
<div style="left:418.41px;top:30.20px;width:5.00px;height:0.90px;background:#222"></div>
<svg class="tx" role="img" aria-label="设置(S)" style="left:439.20px;top:19.60px" width="36.91" height="12.30" viewBox="0 0 42 14" fill="#000" font-weight="normal"><use href="#g8bbe" x="0"/><use href="#g7f6e" x="12"/><text x="24 30 36" y="10" xml:space="preserve">(S)</text></svg>
<div style="left:465.87px;top:30.20px;width:5.00px;height:0.90px;background:#222"></div>
<svg class="tx" role="img" aria-label="窗口(W)" style="left:486.66px;top:19.60px" width="36.91" height="12.30" viewBox="0 0 42 14" fill="#000" font-weight="normal"><use href="#g7a97" x="0"/><use href="#g53e3" x="12"/><text x="24 30 36" y="10" xml:space="preserve">(W)</text></svg>
<div style="left:513.33px;top:30.20px;width:5.00px;height:0.90px;background:#222"></div>
<svg class="tx" role="img" aria-label="帮助(H)" style="left:534.12px;top:19.60px" width="36.91" height="12.30" viewBox="0 0 42 14" fill="#000" font-weight="normal"><use href="#g5e2e" x="0"/><use href="#g52a9" x="12"/><text x="24 30 36" y="10" xml:space="preserve">(H)</text></svg>
<div style="left:560.79px;top:30.20px;width:5.00px;height:0.90px;background:#222"></div>
<div style="left:0.00px;top:32.60px;width:900.00px;height:1.00px;background:#808080"></div>
<div style="left:0.00px;top:33.60px;width:900.00px;height:1.00px;background:#ffffff"></div>
<div style="left:0.00px;top:59.40px;width:900.00px;height:1.00px;background:#808080"></div>
<div style="left:0.00px;top:60.40px;width:900.00px;height:1.00px;background:#ffffff"></div>
<div style="left:0.00px;top:34.00px;width:1.00px;height:25.40px;background:#ffffff"></div>
<div style="left:340.80px;top:34.60px;width:1.00px;height:24.80px;background:#808080"></div>
<div style="left:342.00px;top:34.60px;width:1.00px;height:24.80px;background:#ffffff"></div>
<div style="left:437.40px;top:34.60px;width:1.00px;height:24.80px;background:#808080"></div>
<div style="left:438.60px;top:34.60px;width:1.00px;height:24.80px;background:#ffffff"></div>
<div style="left:787.40px;top:34.60px;width:1.00px;height:24.80px;background:#808080"></div>
<div style="left:788.60px;top:34.60px;width:1.00px;height:24.80px;background:#ffffff"></div>
<div style="left:2.40px;top:37.30px;width:2.40px;height:19.60px;background:#f6f5f2;border-right:0.9px solid #8c8a86;border-bottom:0.9px solid #8c8a86;box-sizing:border-box"></div>
<div style="left:440.20px;top:37.30px;width:2.40px;height:19.60px;background:#f6f5f2;border-right:0.9px solid #8c8a86;border-bottom:0.9px solid #8c8a86;box-sizing:border-box"></div>
<div style="left:28.20px;top:37.60px;width:1.00px;height:19.00px;background:#808080"></div>
<div style="left:29.20px;top:37.60px;width:1.00px;height:19.00px;background:#ffffff"></div>
<div style="left:114.20px;top:37.60px;width:1.00px;height:19.00px;background:#808080"></div>
<div style="left:115.20px;top:37.60px;width:1.00px;height:19.00px;background:#ffffff"></div>
<div style="left:179.90px;top:37.60px;width:1.00px;height:19.00px;background:#808080"></div>
<div style="left:180.90px;top:37.60px;width:1.00px;height:19.00px;background:#ffffff"></div>
<div style="left:248.80px;top:37.60px;width:1.00px;height:19.00px;background:#808080"></div>
<div style="left:249.80px;top:37.60px;width:1.00px;height:19.00px;background:#ffffff"></div>
<div style="left:273.80px;top:37.60px;width:1.00px;height:19.00px;background:#808080"></div>
<div style="left:274.80px;top:37.60px;width:1.00px;height:19.00px;background:#ffffff"></div>
<div style="left:466.50px;top:37.60px;width:1.00px;height:19.00px;background:#808080"></div>
<div style="left:467.50px;top:37.60px;width:1.00px;height:19.00px;background:#ffffff"></div>
<div style="left:511.60px;top:37.60px;width:1.00px;height:19.00px;background:#808080"></div>
<div style="left:512.60px;top:37.60px;width:1.00px;height:19.00px;background:#ffffff"></div>
<div style="left:557.90px;top:37.60px;width:1.00px;height:19.00px;background:#808080"></div>
<div style="left:558.90px;top:37.60px;width:1.00px;height:19.00px;background:#ffffff"></div>
<div style="left:603.90px;top:37.60px;width:1.00px;height:19.00px;background:#808080"></div>
<div style="left:604.90px;top:37.60px;width:1.00px;height:19.00px;background:#ffffff"></div>
<div style="left:649.10px;top:37.60px;width:1.00px;height:19.00px;background:#808080"></div>
<div style="left:650.10px;top:37.60px;width:1.00px;height:19.00px;background:#ffffff"></div>
<div style="left:695.00px;top:37.60px;width:1.00px;height:19.00px;background:#808080"></div>
<div style="left:696.00px;top:37.60px;width:1.00px;height:19.00px;background:#ffffff"></div>
<div style="left:740.70px;top:37.60px;width:1.00px;height:19.00px;background:#808080"></div>
<div style="left:741.70px;top:37.60px;width:1.00px;height:19.00px;background:#ffffff"></div>
<div style="left:0.00px;top:61.00px;width:1.00px;height:25.60px;background:#ffffff"></div>
<div style="left:0.00px;top:86.00px;width:472.20px;height:1.00px;background:#808080"></div>
<div style="left:0.00px;top:87.00px;width:472.20px;height:1.00px;background:#ffffff"></div>
<div style="left:471.40px;top:61.20px;width:1.00px;height:25.60px;background:#808080"></div>
<div style="left:2.40px;top:63.80px;width:2.40px;height:18.40px;background:#f6f5f2;border-right:0.9px solid #8c8a86;border-bottom:0.9px solid #8c8a86;box-sizing:border-box"></div>
<div style="left:603.40px;top:61.20px;width:1.00px;height:25.40px;background:#ffffff"></div>
<div style="left:603.40px;top:86.00px;width:214.40px;height:1.00px;background:#808080"></div>
<div style="left:816.80px;top:61.20px;width:1.00px;height:25.60px;background:#808080"></div>
<div style="left:606.40px;top:63.40px;width:2.40px;height:20.20px;background:#f6f5f2;border-right:0.9px solid #8c8a86;border-bottom:0.9px solid #8c8a86;box-sizing:border-box"></div>
<div style="left:0.00px;top:88.00px;width:1.00px;height:26.00px;background:#ffffff"></div>
<div style="left:418.20px;top:88.20px;width:1.00px;height:26.00px;background:#808080"></div>
<div style="left:2.40px;top:91.00px;width:2.40px;height:19.60px;background:#f6f5f2;border-right:0.9px solid #8c8a86;border-bottom:0.9px solid #8c8a86;box-sizing:border-box"></div>
<svg class="tx" role="img" aria-label="机器:" style="left:5.60px;top:71.40px" width="26.37" height="12.30" viewBox="0 0 30 14" fill="#000" font-weight="normal"><use href="#g673a" x="0"/><use href="#g5668" x="12"/><text x="24" y="10" xml:space="preserve">:</text></svg>
<div style="left:32.60px;top:67.60px;width:86.60px;height:16.60px;background:#fff;border:1px solid;border-color:#808080 #ffffff #ffffff #808080;box-sizing:border-box"></div>
<div style="left:33.60px;top:68.60px;width:84.60px;height:14.60px;border:1px solid;border-color:#404040 #d4d0c8 #d4d0c8 #404040;box-sizing:border-box"></div>
<div style="left:105.00px;top:69.30px;width:12.90px;height:13.60px;background:#d4d0c8;border:1px solid;border-color:#d4d0c8 #404040 #404040 #d4d0c8;box-sizing:border-box"></div>
<div style="left:106.00px;top:70.30px;width:10.90px;height:11.60px;border:1px solid;border-color:#ffffff #808080 #808080 #ffffff;box-sizing:border-box"></div>
<svg class="ab" style="left:108.00px;top:74.50px" width="7" height="4" viewBox="0 0 7 4"><path d="M0.2 0.2h6.2L3.3 3.6z" fill="#000"/></svg>
<svg class="tx" role="img" aria-label="绣花机" style="left:36.20px;top:71.40px" width="31.64" height="12.30" viewBox="0 0 36 14" fill="#000" font-weight="normal"><use href="#g7ee3" x="0"/><use href="#g82b1" x="12"/><use href="#g673a" x="24"/></svg>
<svg class="tx" role="img" aria-label="数据格式:" style="left:124.60px;top:71.40px" width="47.46" height="12.30" viewBox="0 0 54 14" fill="#000" font-weight="normal"><use href="#g6570" x="0"/><use href="#g636e" x="12"/><use href="#g683c" x="24"/><use href="#g5f0f" x="36"/><text x="48" y="10" xml:space="preserve">:</text></svg>
<div style="left:172.80px;top:67.60px;width:87.20px;height:16.60px;background:#fff;border:1px solid;border-color:#808080 #ffffff #ffffff #808080;box-sizing:border-box"></div>
<div style="left:173.80px;top:68.60px;width:85.20px;height:14.60px;border:1px solid;border-color:#404040 #d4d0c8 #d4d0c8 #404040;box-sizing:border-box"></div>
<div style="left:245.80px;top:69.30px;width:12.90px;height:13.60px;background:#d4d0c8;border:1px solid;border-color:#d4d0c8 #404040 #404040 #d4d0c8;box-sizing:border-box"></div>
<div style="left:246.80px;top:70.30px;width:10.90px;height:11.60px;border:1px solid;border-color:#ffffff #808080 #808080 #ffffff;box-sizing:border-box"></div>
<svg class="ab" style="left:248.80px;top:74.50px" width="7" height="4" viewBox="0 0 7 4"><path d="M0.2 0.2h6.2L3.3 3.6z" fill="#000"/></svg>
<svg class="tx" role="img" aria-label="(*.DST) 田岛" style="left:177.60px;top:71.40px" width="63.28" height="12.30" viewBox="0 0 72 14" fill="#000" font-weight="normal"><text x="0 6 12 18 24 30 36 42" y="10" xml:space="preserve">(*.DST) </text><use href="#g7530" x="48"/><use href="#g5c9b" x="60"/></svg>
<svg class="tx" role="img" aria-label="精度:" style="left:265.80px;top:71.40px" width="26.37" height="12.30" viewBox="0 0 30 14" fill="#000" font-weight="normal"><use href="#g7cbe" x="0"/><use href="#g5ea6" x="12"/><text x="24" y="10" xml:space="preserve">:</text></svg>
<div style="left:292.80px;top:67.60px;width:86.80px;height:16.60px;background:#fff;border:1px solid;border-color:#808080 #ffffff #ffffff #808080;box-sizing:border-box"></div>
<div style="left:293.80px;top:68.60px;width:84.80px;height:14.60px;border:1px solid;border-color:#404040 #d4d0c8 #d4d0c8 #404040;box-sizing:border-box"></div>
<div style="left:365.40px;top:69.30px;width:12.90px;height:13.60px;background:#d4d0c8;border:1px solid;border-color:#d4d0c8 #404040 #404040 #d4d0c8;box-sizing:border-box"></div>
<div style="left:366.40px;top:70.30px;width:10.90px;height:11.60px;border:1px solid;border-color:#ffffff #808080 #808080 #ffffff;box-sizing:border-box"></div>
<svg class="ab" style="left:368.40px;top:74.50px" width="7" height="4" viewBox="0 0 7 4"><path d="M0.2 0.2h6.2L3.3 3.6z" fill="#000"/></svg>
<svg class="tx" role="img" aria-label="0.1 mm" style="left:295.80px;top:71.40px" width="31.64" height="12.30" viewBox="0 0 36 14" fill="#000" font-weight="normal"><text x="0 6 12 18 24 30" y="10" xml:space="preserve">0.1 mm</text></svg>
<svg class="tx" role="img" aria-label="缩放倍率:" style="left:5.60px;top:98.20px" width="47.46" height="12.30" viewBox="0 0 54 14" fill="#000" font-weight="normal"><use href="#g7f29" x="0"/><use href="#g653e" x="12"/><use href="#g500d" x="24"/><use href="#g7387" x="36"/><text x="48" y="10" xml:space="preserve">:</text></svg>
<div style="left:53.60px;top:94.80px;width:86.40px;height:16.00px;background:#fff;border:1px solid;border-color:#808080 #ffffff #ffffff #808080;box-sizing:border-box"></div>
<div style="left:54.60px;top:95.80px;width:84.40px;height:14.00px;border:1px solid;border-color:#404040 #d4d0c8 #d4d0c8 #404040;box-sizing:border-box"></div>
<div style="left:125.80px;top:96.50px;width:12.90px;height:13.00px;background:#d4d0c8;border:1px solid;border-color:#d4d0c8 #404040 #404040 #d4d0c8;box-sizing:border-box"></div>
<div style="left:126.80px;top:97.50px;width:10.90px;height:11.00px;border:1px solid;border-color:#ffffff #808080 #808080 #ffffff;box-sizing:border-box"></div>
<svg class="ab" style="left:128.80px;top:101.40px" width="7" height="4" viewBox="0 0 7 4"><path d="M0.2 0.2h6.2L3.3 3.6z" fill="#000"/></svg>
<div class="lb" style="left:56.4px;top:97.6px;font-size:9.1px">32%</div>
<div style="left:387.40px;top:64.40px;width:20.00px;height:19.20px;background:#d4d0c8;border:1px solid;border-color:#ffffff #404040 #404040 #ffffff;box-sizing:border-box"></div>
<div style="left:388.40px;top:65.40px;width:18.00px;height:17.20px;border:1px solid;border-color:#d4d0c8 #808080 #808080 #d4d0c8;box-sizing:border-box"></div>
<div style="left:407.80px;top:64.40px;width:20.00px;height:19.20px;background:#d4d0c8;border:1px solid;border-color:#ffffff #404040 #404040 #ffffff;box-sizing:border-box"></div>
<div style="left:408.80px;top:65.40px;width:18.00px;height:17.20px;border:1px solid;border-color:#d4d0c8 #808080 #808080 #d4d0c8;box-sizing:border-box"></div>
<div style="left:428.20px;top:64.40px;width:20.00px;height:19.20px;background:#d4d0c8;border:1px solid;border-color:#ffffff #404040 #404040 #ffffff;box-sizing:border-box"></div>
<div style="left:429.20px;top:65.40px;width:18.00px;height:17.20px;border:1px solid;border-color:#d4d0c8 #808080 #808080 #d4d0c8;box-sizing:border-box"></div>
<div style="left:448.60px;top:64.40px;width:20.00px;height:19.20px;background:#d4d0c8;border:1px solid;border-color:#ffffff #404040 #404040 #ffffff;box-sizing:border-box"></div>
<div style="left:449.60px;top:65.40px;width:18.00px;height:17.20px;border:1px solid;border-color:#d4d0c8 #808080 #808080 #d4d0c8;box-sizing:border-box"></div>
<div style="left:147.00px;top:90.20px;width:20.80px;height:21.20px;background:#eceae6;border:1px solid;border-color:#404040 #ffffff #ffffff #404040;box-sizing:border-box"></div>
<div style="left:148.00px;top:91.20px;width:18.80px;height:19.20px;border:1px solid;border-color:#808080 #d4d0c8 #d4d0c8 #808080;box-sizing:border-box"></div>
<div style="left:168.10px;top:90.20px;width:20.80px;height:21.20px;background:#d4d0c8;border:1px solid;border-color:#ffffff #404040 #404040 #ffffff;box-sizing:border-box"></div>
<div style="left:169.10px;top:91.20px;width:18.80px;height:19.20px;border:1px solid;border-color:#d4d0c8 #808080 #808080 #d4d0c8;box-sizing:border-box"></div>
<div style="left:189.20px;top:90.20px;width:20.80px;height:21.20px;background:#d4d0c8;border:1px solid;border-color:#ffffff #404040 #404040 #ffffff;box-sizing:border-box"></div>
<div style="left:190.20px;top:91.20px;width:18.80px;height:19.20px;border:1px solid;border-color:#d4d0c8 #808080 #808080 #d4d0c8;box-sizing:border-box"></div>
<div style="left:215.60px;top:90.20px;width:20.80px;height:21.20px;background:#d4d0c8;border:1px solid;border-color:#ffffff #404040 #404040 #ffffff;box-sizing:border-box"></div>
<div style="left:216.60px;top:91.20px;width:18.80px;height:19.20px;border:1px solid;border-color:#d4d0c8 #808080 #808080 #d4d0c8;box-sizing:border-box"></div>
<div style="left:236.70px;top:90.20px;width:20.80px;height:21.20px;background:#d4d0c8;border:1px solid;border-color:#ffffff #404040 #404040 #ffffff;box-sizing:border-box"></div>
<div style="left:237.70px;top:91.20px;width:18.80px;height:19.20px;border:1px solid;border-color:#d4d0c8 #808080 #808080 #d4d0c8;box-sizing:border-box"></div>
<div style="left:257.80px;top:90.20px;width:20.80px;height:21.20px;background:#d4d0c8;border:1px solid;border-color:#ffffff #404040 #404040 #ffffff;box-sizing:border-box"></div>
<div style="left:258.80px;top:91.20px;width:18.80px;height:19.20px;border:1px solid;border-color:#d4d0c8 #808080 #808080 #d4d0c8;box-sizing:border-box"></div>
<div style="left:278.90px;top:90.20px;width:20.80px;height:21.20px;background:#d4d0c8;border:1px solid;border-color:#ffffff #404040 #404040 #ffffff;box-sizing:border-box"></div>
<div style="left:279.90px;top:91.20px;width:18.80px;height:19.20px;border:1px solid;border-color:#d4d0c8 #808080 #808080 #d4d0c8;box-sizing:border-box"></div>
<div style="left:300.00px;top:90.20px;width:20.80px;height:21.20px;background:#d4d0c8;border:1px solid;border-color:#ffffff #404040 #404040 #ffffff;box-sizing:border-box"></div>
<div style="left:301.00px;top:91.20px;width:18.80px;height:19.20px;border:1px solid;border-color:#d4d0c8 #808080 #808080 #d4d0c8;box-sizing:border-box"></div>
<div style="left:326.40px;top:90.20px;width:20.80px;height:21.20px;background:#d4d0c8;border:1px solid;border-color:#ffffff #404040 #404040 #ffffff;box-sizing:border-box"></div>
<div style="left:327.40px;top:91.20px;width:18.80px;height:19.20px;border:1px solid;border-color:#d4d0c8 #808080 #808080 #d4d0c8;box-sizing:border-box"></div>
<div style="left:352.80px;top:90.20px;width:20.80px;height:21.20px;background:#d4d0c8;border:1px solid;border-color:#ffffff #404040 #404040 #ffffff;box-sizing:border-box"></div>
<div style="left:353.80px;top:91.20px;width:18.80px;height:19.20px;border:1px solid;border-color:#d4d0c8 #808080 #808080 #d4d0c8;box-sizing:border-box"></div>
<div style="left:373.90px;top:90.20px;width:20.80px;height:21.20px;background:#d4d0c8;border:1px solid;border-color:#ffffff #404040 #404040 #ffffff;box-sizing:border-box"></div>
<div style="left:374.90px;top:91.20px;width:18.80px;height:19.20px;border:1px solid;border-color:#d4d0c8 #808080 #808080 #d4d0c8;box-sizing:border-box"></div>
<div style="left:395.00px;top:90.20px;width:20.80px;height:21.20px;background:#d4d0c8;border:1px solid;border-color:#ffffff #404040 #404040 #ffffff;box-sizing:border-box"></div>
<div style="left:396.00px;top:91.20px;width:18.80px;height:19.20px;border:1px solid;border-color:#d4d0c8 #808080 #808080 #d4d0c8;box-sizing:border-box"></div>
<div style="left:0.00px;top:114.00px;width:900.00px;height:1.30px;background:#6e6e6e"></div>
<div style="left:0.00px;top:114.60px;width:1.00px;height:300.40px;background:#ffffff"></div>
<div style="left:0.00px;top:114.60px;width:26.00px;height:1.00px;background:#ffffff"></div>
<div style="left:25.20px;top:114.60px;width:1.00px;height:300.40px;background:#808080"></div>
<div style="left:0.00px;top:414.40px;width:26.20px;height:1.00px;background:#808080"></div>
<div style="left:2.80px;top:118.00px;width:19.80px;height:2.40px;background:#f6f5f2;border-right:0.9px solid #8c8a86;border-bottom:0.9px solid #8c8a86;box-sizing:border-box"></div>
<div style="left:27.00px;top:114.60px;width:1.00px;height:379.60px;background:#ffffff"></div>
<div style="left:27.00px;top:114.60px;width:25.00px;height:1.00px;background:#ffffff"></div>
<div style="left:26.00px;top:252.00px;width:1.00px;height:242.40px;background:#808080"></div>
<div style="left:27.00px;top:221.00px;width:26.00px;height:1.00px;background:#808080"></div>
<div style="left:27.00px;top:222.00px;width:26.00px;height:1.00px;background:#ffffff"></div>
<div style="left:27.00px;top:251.40px;width:26.00px;height:1.00px;background:#808080"></div>
<div style="left:27.00px;top:252.40px;width:26.00px;height:1.00px;background:#ffffff"></div>
<div style="left:26.00px;top:493.60px;width:27.00px;height:1.00px;background:#808080"></div>
<div style="left:29.60px;top:118.00px;width:20.40px;height:2.40px;background:#f6f5f2;border-right:0.9px solid #8c8a86;border-bottom:0.9px solid #8c8a86;box-sizing:border-box"></div>
<div style="left:29.60px;top:255.20px;width:20.40px;height:2.40px;background:#f6f5f2;border-right:0.9px solid #8c8a86;border-bottom:0.9px solid #8c8a86;box-sizing:border-box"></div>
<div style="left:52.40px;top:114.60px;width:1.00px;height:438.00px;background:#9a9892"></div>
<div style="left:53.40px;top:114.60px;width:1.00px;height:438.00px;background:#555"></div>
<div style="left:54.40px;top:114.40px;width:790.00px;height:438.00px;background:#808080"></div>
<div style="left:54.40px;top:115.60px;width:789.60px;height:16.60px;background:#e1ded8"></div>
<div style="left:54.40px;top:115.50px;width:789.60px;height:1.00px;background:#f8f7f4"></div>
<div style="left:54.40px;top:132.00px;width:789.60px;height:1.40px;background:#404040"></div>
<div style="left:54.40px;top:115.60px;width:16.40px;height:436.40px;background:#e1ded8"></div>
<div style="left:54.40px;top:115.60px;width:1.00px;height:436.40px;background:#f8f7f4"></div>
<div style="left:70.60px;top:115.60px;width:1.40px;height:436.40px;background:#404040"></div>
<div style="left:54.40px;top:132.00px;width:17.60px;height:1.40px;background:#404040"></div>
<div style="left:70.80px;top:115.60px;width:1.00px;height:17.00px;background:#202020"></div>
<svg class="ab" style="left:55.8px;top:119.6px" width="14.6" height="10.2" viewBox="0 0 24 12" preserveAspectRatio="none" fill="#222"><use href="#b6beb"/><use href="#b7c73" x="12"/></svg>
<svg class="ab" style="left:0;top:0" width="900" height="552" viewBox="0 0 900 552" font-family="Liberation Sans" font-size="8.9" fill="#111" stroke="#222" stroke-width="0"><g stroke-width="1"><path d="M84.75 127.6V132" /><path d="M107.48 130.4V132" /><path d="M130.21 130.4V132" /><path d="M152.94 130.4V132" /><path d="M175.67 130.4V132" /><path d="M198.40 127.6V132" /><path d="M221.13 130.4V132" /><path d="M243.86 130.4V132" /><path d="M266.59 130.4V132" /><path d="M289.32 130.4V132" /><path d="M312.05 127.6V132" /><path d="M334.78 130.4V132" /><path d="M357.51 130.4V132" /><path d="M380.24 130.4V132" /><path d="M402.97 130.4V132" /><path d="M425.70 127.6V132" /><path d="M448.43 130.4V132" /><path d="M471.16 130.4V132" /><path d="M493.89 130.4V132" /><path d="M516.62 130.4V132" /><path d="M539.35 127.6V132" /><path d="M562.08 130.4V132" /><path d="M584.81 130.4V132" /><path d="M607.54 130.4V132" /><path d="M630.27 130.4V132" /><path d="M653.00 127.6V132" /><path d="M675.73 130.4V132" /><path d="M698.46 130.4V132" /><path d="M721.19 130.4V132" /><path d="M743.92 130.4V132" /><path d="M766.65 127.6V132" /><path d="M789.38 130.4V132" /><path d="M812.11 130.4V132" /><path d="M69.2 154.07H70.8" /><path d="M67 176.80H70.8" /><path d="M69.2 199.53H70.8" /><path d="M69.2 222.26H70.8" /><path d="M69.2 244.99H70.8" /><path d="M69.2 267.72H70.8" /><path d="M67 290.45H70.8" /><path d="M69.2 313.18H70.8" /><path d="M69.2 335.91H70.8" /><path d="M69.2 358.64H70.8" /><path d="M69.2 381.37H70.8" /><path d="M67 404.10H70.8" /><path d="M69.2 426.83H70.8" /><path d="M69.2 449.56H70.8" /><path d="M69.2 472.29H70.8" /><path d="M69.2 495.02H70.8" /><path d="M67 517.75H70.8" /><path d="M69.2 540.48H70.8" /></g><text transform="translate(84.75 124) scale(0.9 1)" text-anchor="middle">-10</text><text transform="translate(198.40 124) scale(0.9 1)" text-anchor="middle">0</text><text transform="translate(312.05 124) scale(0.9 1)" text-anchor="middle">10</text><text transform="translate(425.70 124) scale(0.9 1)" text-anchor="middle">20</text><text transform="translate(539.35 124) scale(0.9 1)" text-anchor="middle">30</text><text transform="translate(653.00 124) scale(0.9 1)" text-anchor="middle">40</text><text transform="translate(766.65 124) scale(0.9 1)" text-anchor="middle">50</text><text transform="translate(62.9 176.80) rotate(-90) scale(0.9 1)" text-anchor="middle">0</text><text transform="translate(62.9 290.45) rotate(-90) scale(0.9 1)" text-anchor="middle">10</text><text transform="translate(62.9 404.10) rotate(-90) scale(0.9 1)" text-anchor="middle">20</text><text transform="translate(62.9 517.75) rotate(-90) scale(0.9 1)" text-anchor="middle">30</text></svg>
<div style="left:206.60px;top:185.20px;width:520.80px;height:344.00px;background:#120405"></div>
<div style="left:198.00px;top:177.60px;width:520.60px;height:345.80px;background:#fff"></div>
<div style="left:526.20px;top:177.60px;width:1.60px;height:345.80px;background:#555"></div>
<div style="left:526.30px;top:115.80px;width:1.40px;height:16.40px;background:#444"></div>
<div style="left:198.00px;top:297.80px;width:520.60px;height:1.00px;background:#222"></div>
<div style="left:54.60px;top:297.90px;width:16.20px;height:1.00px;background:#333"></div>
<div style="left:526.30px;top:297.70px;width:1.40px;height:1.20px;background:#e8e8e8"></div>
<div style="left:844.00px;top:114.60px;width:56.00px;height:438.00px;background:#d4d0c8"></div>
<div style="left:844.00px;top:114.00px;width:56.00px;height:1.20px;background:#ffffff"></div>
<div style="left:844.00px;top:115.00px;width:1.60px;height:437.00px;background:#e8e6e0"></div>
<div style="left:846.00px;top:115.40px;width:1.00px;height:436.60px;background:#ffffff"></div>
<div style="left:846.00px;top:115.40px;width:26.00px;height:1.00px;background:#ffffff"></div>
<div style="left:871.80px;top:115.40px;width:1.00px;height:436.60px;background:#808080"></div>
<div style="left:846.00px;top:262.80px;width:26.00px;height:1.00px;background:#808080"></div>
<div style="left:846.00px;top:263.80px;width:26.00px;height:1.00px;background:#ffffff"></div>
<div style="left:846.00px;top:304.00px;width:26.00px;height:1.00px;background:#808080"></div>
<div style="left:846.00px;top:305.00px;width:26.00px;height:1.00px;background:#ffffff"></div>
<div style="left:846.00px;top:526.80px;width:26.00px;height:1.00px;background:#808080"></div>
<div style="left:846.00px;top:527.80px;width:26.00px;height:1.00px;background:#ffffff"></div>
<div style="left:848.20px;top:120.60px;width:19.60px;height:2.40px;background:#f6f5f2;border-right:0.9px solid #8c8a86;border-bottom:0.9px solid #8c8a86;box-sizing:border-box"></div>
<div style="left:848.20px;top:307.80px;width:19.60px;height:2.40px;background:#f6f5f2;border-right:0.9px solid #8c8a86;border-bottom:0.9px solid #8c8a86;box-sizing:border-box"></div>
<div style="left:874.20px;top:116.60px;width:1.00px;height:436.00px;background:#ffffff"></div>
<div style="left:874.20px;top:116.60px;width:26.00px;height:1.00px;background:#ffffff"></div>
<div style="left:873.20px;top:116.60px;width:0.80px;height:436.00px;background:#808080"></div>
<div style="left:879.80px;top:126.60px;width:17.60px;height:14.20px;background:#d4d0c8;border:1px solid;border-color:#ffffff #404040 #404040 #ffffff;box-sizing:border-box"></div>
<div style="left:880.80px;top:127.60px;width:15.60px;height:12.20px;border:1px solid;border-color:#d4d0c8 #808080 #808080 #d4d0c8;box-sizing:border-box"></div>
<svg class="ab" style="left:885.2px;top:131.4px" width="7" height="4" viewBox="0 0 7 4"><path d="M0.2 3.8h6.4L3.4 0.4z" fill="#808080"/></svg>
<svg class="ab" style="left:879.6px;top:144.8px" width="18" height="13.6" viewBox="0 0 18 13.6"><rect x="0.8" y="0.8" width="16.4" height="12" fill="#fff" stroke="#000" stroke-width="1.6"/><rect x="4.6" y="2.8" width="8.6" height="8" fill="none" stroke="#333" stroke-width="0.9"/><path d="M4.6 2.8l8.6 8M13.2 2.8l-8.6 8" stroke="#333" stroke-width="0.9"/></svg>
<div style="left:879.80px;top:549.40px;width:17.60px;height:2.60px;background:#ffffff"></div>
<div style="left:876.80px;top:160.20px;width:23.20px;height:19.60px;background:#000"></div>
<div class="sw" style="left:880.20px;top:163.60px;width:17.20px;height:12.80px;background:#22cc22;border:1.3px solid #1a1a1a;box-sizing:border-box;color:#003c00">01</div>
<div class="sw" style="left:880.20px;top:181.18px;width:17.20px;height:12.80px;background:#1212c4;border:1.3px solid #1a1a1a;box-sizing:border-box;color:#0808a4">02</div>
<div class="sw" style="left:880.20px;top:198.76px;width:17.20px;height:12.80px;background:#dc1616;border:1.3px solid #1a1a1a;box-sizing:border-box;color:#8c0000">03</div>
<div class="sw" style="left:880.20px;top:216.34px;width:17.20px;height:12.80px;background:#f8f83c;border:1.3px solid #1a1a1a;box-sizing:border-box;color:#000">04</div>
<div class="sw" style="left:880.20px;top:233.92px;width:17.20px;height:12.80px;background:#34e0e0;border:1.3px solid #1a1a1a;box-sizing:border-box;color:#003838">05</div>
<div class="sw" style="left:880.20px;top:251.50px;width:17.20px;height:12.80px;background:#e828e8;border:1.3px solid #1a1a1a;box-sizing:border-box;color:#6c006c">06</div>
<div class="sw" style="left:880.20px;top:269.08px;width:17.20px;height:12.80px;background:#169016;border:1.3px solid #1a1a1a;box-sizing:border-box;color:#004400">07</div>
<div class="sw" style="left:880.20px;top:286.66px;width:17.20px;height:12.80px;background:#00007c;border:1.3px solid #1a1a1a;box-sizing:border-box;color:#000060">08</div>
<div class="sw" style="left:880.20px;top:304.24px;width:17.20px;height:12.80px;background:#7c1010;border:1.3px solid #1a1a1a;box-sizing:border-box;color:#4c0000">09</div>
<div class="sw" style="left:880.20px;top:321.82px;width:17.20px;height:12.80px;background:#ffa850;border:1.3px solid #1a1a1a;box-sizing:border-box;color:#2c0c00">10</div>
<div class="sw" style="left:880.20px;top:339.40px;width:17.20px;height:12.80px;background:#8010d0;border:1.3px solid #1a1a1a;box-sizing:border-box;color:#4c0088">11</div>
<div class="sw" style="left:880.20px;top:356.98px;width:17.20px;height:12.80px;background:#a07850;border:1.3px solid #1a1a1a;box-sizing:border-box;color:#2c0c00">12</div>
<div class="sw" style="left:880.20px;top:374.56px;width:17.20px;height:12.80px;background:#ffffff;border:1.3px solid #1a1a1a;box-sizing:border-box;color:#000">13</div>
<div class="sw" style="left:880.20px;top:392.14px;width:17.20px;height:12.80px;background:#000000;border:1.3px solid #1a1a1a;box-sizing:border-box;color:#000">14</div>
<div class="sw" style="left:880.20px;top:409.72px;width:17.20px;height:12.80px;background:#f880c0;border:1.3px solid #1a1a1a;box-sizing:border-box;color:#580028">15</div>
<div class="sw" style="left:880.20px;top:427.30px;width:17.20px;height:12.80px;background:#ffc8a0;border:1.3px solid #1a1a1a;box-sizing:border-box;color:#2c0c00">16</div>
<div class="sw" style="left:880.20px;top:444.88px;width:17.20px;height:12.80px;background:#70f0b0;border:1.3px solid #1a1a1a;box-sizing:border-box;color:#00401c">17</div>
<div class="sw" style="left:880.20px;top:462.46px;width:17.20px;height:12.80px;background:#686868;border:1.3px solid #1a1a1a;box-sizing:border-box;color:#282828">18</div>
<div class="sw" style="left:880.20px;top:480.04px;width:17.20px;height:12.80px;background:#a4a47c;border:1.3px solid #1a1a1a;box-sizing:border-box;color:#282810">19</div>
<div class="sw" style="left:880.20px;top:497.62px;width:17.20px;height:12.80px;background:#8484f4;border:1.3px solid #1a1a1a;box-sizing:border-box;color:#0c0c64">20</div>
<div class="sw" style="left:880.20px;top:515.20px;width:17.20px;height:12.80px;background:#a40e14;border:1.3px solid #1a1a1a;box-sizing:border-box;color:#680000">21</div>
<div class="sw" style="left:880.20px;top:532.78px;width:17.20px;height:12.80px;background:#a91016;border:1.3px solid #1a1a1a;box-sizing:border-box;color:#6c0000">22</div>
<svg class="ic" style="left:8.48px;top:38.78px" width="15.04" height="15.04" viewBox="0 0 16 16"><path d="M3.6 2.4h5.6l3.2 3.2v8H3.6z" fill="#fff" stroke="#000" stroke-width="1.1"/><path d="M9 2.4v3.4h3.4" fill="none" stroke="#000" stroke-width="1"/></svg>
<svg class="ic" style="left:34.28px;top:38.78px" width="15.04" height="15.04" viewBox="0 0 16 16"><path d="M1.6 13.2V5.2h3.2l1 1.2h4.8v2" fill="#f4f0a0" stroke="#000" stroke-width="1"/><path d="M1.6 13.2l2.6-5h10.2l-3 5z" fill="#8c8c30" stroke="#000" stroke-width="1"/><path d="M9.2 3.6c1.4-1.6 3.4-1.4 4.4 0.4" fill="none" stroke="#000" stroke-width="1"/><path d="M14.4 2.4v2.8h-2.8z" fill="#000"/></svg>
<svg class="ic" style="left:54.08px;top:38.78px" width="15.04" height="15.04" viewBox="0 0 16 16"><rect x="1.8" y="2.2" width="12.4" height="12" fill="#5e5e2c" stroke="#202008" stroke-width="1.1"/><rect x="4.4" y="3" width="7" height="4.4" fill="#b8b8b0"/><rect x="4.4" y="9.6" width="7.4" height="4.4" fill="#101008"/><rect x="9.6" y="10.6" width="1.6" height="2.6" fill="#e8e8e8"/></svg>
<svg class="ic" style="left:74.28px;top:38.78px" width="15.04" height="15.04" viewBox="0 0 16 16"><path d="M4.6 2.2h9.4v8.6h-2" fill="#101010" stroke="#000" stroke-width="1"/><path d="M3.4 3.8h9v8.4" fill="#181818" stroke="#000" stroke-width="1"/><rect x="2" y="5.2" width="9.4" height="9" fill="#1c3c20" stroke="#000" stroke-width="1"/><rect x="4" y="5.8" width="5.4" height="3" fill="#e8efe8"/><rect x="4.4" y="10.8" width="4.6" height="3.2" fill="#0a1a0c"/><rect x="7.4" y="11.4" width="1.1" height="2" fill="#cfd8cf"/><path d="M5.6 3.2h6M6.8 1.8h6" stroke="#d8d8d8" stroke-width="0.8"/></svg>
<svg class="ic" style="left:94.48px;top:38.78px" width="15.04" height="15.04" viewBox="0 0 16 16"><rect x="1" y="2.6" width="7.2" height="7" fill="#181818"/><rect x="2.6" y="3.4" width="3.8" height="2.2" fill="#b8b8b8"/><rect x="2.8" y="7" width="3.6" height="2.4" fill="#606060"/><rect x="7.2" y="6.6" width="7.6" height="7.6" fill="#181818"/><rect x="9" y="7.4" width="4" height="2.4" fill="#a8a8a8"/><rect x="9.2" y="11.2" width="3.8" height="2.8" fill="#585858"/><path d="M9.6 2.6h4.8v3.2" fill="none" stroke="#202020" stroke-width="1.2"/><path d="M13.8 2.8l-2.6 2.6" stroke="#202020" stroke-width="1"/></svg>
<svg class="ic" style="left:120.48px;top:38.78px" width="15.04" height="15.04" viewBox="0 0 16 16"><g color="#fff" transform="translate(0.9,0.9)"><path class="s" d="M6 2.2l3.4 8M10.2 2.2l-3.4 8" stroke-width="1.1"/><ellipse class="s" cx="5.6" cy="11.8" rx="1.6" ry="2.1" stroke-width="1"/><ellipse class="s" cx="10.6" cy="11.8" rx="1.6" ry="2.1" stroke-width="1"/></g><g color="#808080"><path class="s" d="M6 2.2l3.4 8M10.2 2.2l-3.4 8" stroke-width="1.1"/><ellipse class="s" cx="5.6" cy="11.8" rx="1.6" ry="2.1" stroke-width="1"/><ellipse class="s" cx="10.6" cy="11.8" rx="1.6" ry="2.1" stroke-width="1"/></g></svg>
<svg class="ic" style="left:140.68px;top:38.78px" width="15.04" height="15.04" viewBox="0 0 16 16"><g color="#fff" transform="translate(0.9,0.9)"><path class="s" d="M1.8 2.4h4.2l2 2v5.8H1.8z"/><path class="s" d="M3.2 5h2.6M3.2 7h3.6"/><path class="s" d="M7.2 6h4.4l2.2 2.2v5.6H7.2z"/><path class="s" d="M11.4 6v2.4h2.4M8.6 9.8h3M8.6 11.6h4"/></g><g color="#808080"><path class="s" d="M1.8 2.4h4.2l2 2v5.8H1.8z"/><path class="s" d="M3.2 5h2.6M3.2 7h3.6"/><path class="s" d="M7.2 6h4.4l2.2 2.2v5.6H7.2z"/><path class="s" d="M11.4 6v2.4h2.4M8.6 9.8h3M8.6 11.6h4"/></g></svg>
<svg class="ic" style="left:160.88px;top:38.78px" width="15.04" height="15.04" viewBox="0 0 16 16"><rect x="1.6" y="3.2" width="11.2" height="10.8" rx="1" fill="#84845c" stroke="#000" stroke-width="1.2"/><path d="M4.6 4.8c0-2.6 5.2-2.6 5.2 0z" fill="#d8d8d0" stroke="#000" stroke-width="1"/><rect x="4.2" y="4.4" width="6" height="1.2" fill="#000"/><rect x="7.4" y="8.6" width="7.2" height="5.6" fill="#fff" stroke="#10106c" stroke-width="1.2"/><path d="M9 10.6h3M9 12.2h4" stroke="#10106c" stroke-width="1"/></svg>
<svg class="ic" style="left:185.88px;top:38.78px" width="15.04" height="15.04" viewBox="0 0 16 16"><g color="#fff" transform="translate(0.9,0.9)"><path class="s" d="M3.4 6.2c2-3.4 8.8-3.4 9.8 1 .6 2.6-1.6 4-3.4 4.2" stroke-width="1.1"/><path class="f" d="M1.6 4.2l0.6 4 3.6-1.4z"/><rect class="f" x="1.2" y="12.2" width="7.4" height="1.5"/><path class="s" d="M9.6 13h4.6" stroke-dasharray="1 1"/></g><g color="#808080"><path class="s" d="M3.4 6.2c2-3.4 8.8-3.4 9.8 1 .6 2.6-1.6 4-3.4 4.2" stroke-width="1.1"/><path class="f" d="M1.6 4.2l0.6 4 3.6-1.4z"/><rect class="f" x="1.2" y="12.2" width="7.4" height="1.5"/><path class="s" d="M9.6 13h4.6" stroke-dasharray="1 1"/></g></svg>
<svg class="ic" style="left:202.38px;top:38.78px" width="15.04" height="15.04" viewBox="0 0 16 16"><g color="#fff" transform="translate(0.8,0.8)"><path class="f" d="M5.8 7.6h4.4l-2.2 2.6z"/></g><g color="#808080"><path class="f" d="M5.8 7.6h4.4l-2.2 2.6z"/></g></svg>
<svg class="ic" style="left:217.88px;top:38.78px" width="15.04" height="15.04" viewBox="0 0 16 16"><g color="#fff" transform="translate(0.9,0.9)"><path class="s" d="M12.6 6.2c-2-3.4-8.8-3.4-9.8 1-.6 2.6 1.6 4 3.4 4.2" stroke-width="1.1"/><path class="f" d="M14.4 4.2l-0.6 4-3.6-1.4z"/><rect class="f" x="7.4" y="12.2" width="7.4" height="1.5"/><path class="s" d="M1.8 13h4.6" stroke-dasharray="1 1"/></g><g color="#808080"><path class="s" d="M12.6 6.2c-2-3.4-8.8-3.4-9.8 1-.6 2.6 1.6 4 3.4 4.2" stroke-width="1.1"/><path class="f" d="M14.4 4.2l-0.6 4-3.6-1.4z"/><rect class="f" x="7.4" y="12.2" width="7.4" height="1.5"/><path class="s" d="M1.8 13h4.6" stroke-dasharray="1 1"/></g></svg>
<svg class="ic" style="left:234.18px;top:38.78px" width="15.04" height="15.04" viewBox="0 0 16 16"><g color="#fff" transform="translate(0.8,0.8)"><path class="f" d="M5.8 7.6h4.4l-2.2 2.6z"/></g><g color="#808080"><path class="f" d="M5.8 7.6h4.4l-2.2 2.6z"/></g></svg>
<svg class="ic" style="left:254.68px;top:38.78px" width="15.04" height="15.04" viewBox="0 0 16 16"><rect x="7.400" y="1.400" width="7.600" height="13.600" fill="#fff"/><path d="M2.400 13.800V2.600h3.800c4 0 4 5.400 0 5.400H2.600M6 8l4.600 5.800" fill="none" stroke="#d81828" stroke-width="2.700" stroke-linejoin="round"/><path d="M2.400 13.800V2.600h3.800c4 0 4 5.400 0 5.400H2.600M6 8l4.600 5.800" fill="none" stroke="#ffd8d8" stroke-width="0.800"/><path d="M15 10.400v4.600h-4.600z" fill="#000"/></svg>
<svg class="ic" style="left:279.68px;top:38.78px" width="15.04" height="15.04" viewBox="0 0 16 16"><path d="M4.400 6.600l2-4.400h6.600l-1.800 4.400z" fill="#fff" stroke="#000" stroke-width="1"/><path d="M7 3.600h4M6.400 5h4" stroke="#333" stroke-width="0.700"/><path d="M1.400 8.400l2.400-2h9.400l1.800 2v3.400l-1.600 2H3l-1.600-2z" fill="#d4d4d4" stroke="#000" stroke-width="1.100"/><path d="M1.600 8.600h13.200" stroke="#000" stroke-width="1"/><path d="M2.400 10.800h11.600" stroke="#000" stroke-width="1"/><path d="M3.400 12.800h9.400" stroke="#000" stroke-width="1.200"/><rect x="11.400" y="9.200" width="1.400" height="0.900" fill="#fff"/></svg>
<svg class="ic" style="left:300.28px;top:38.78px" width="15.04" height="15.04" viewBox="0 0 16 16"><g transform="translate(-0.9 -1.1) scale(1.12)"><path d="M4.6 5.6c-.4-4.4 7-4.4 6.6 0-.2 2-2.2 2.4-2.2 4.4h-2.2c0-2.6 2-3 2-4.6 0-1.6-2.2-1.6-2.2.2z" fill="#f0e890" stroke="#000" stroke-width="1"/><circle cx="7.9" cy="12.8" r="1.5" fill="#f0e890" stroke="#000" stroke-width="1"/></g></svg>
<svg class="ic" style="left:320.88px;top:38.78px" width="15.04" height="15.04" viewBox="0 0 16 16"><path d="M1.4 2v10.6l2.6-2.4 1.8 4 1.6-.8-1.8-3.8h3.4z" fill="#000"/><path d="M8 5.2c-.2-4 6.6-4 6.4 0-.2 2.2-2.2 2.4-2.2 4h-2.4c0-2.4 2-2.6 2-4.200 0-1.200-1.600-1.200-1.600 0.200z" fill="#14147c"/><circle cx="11" cy="11.600" r="1.400" fill="#14147c"/></svg>
<svg class="ic" style="left:447.32px;top:39.32px" width="15.36" height="15.36" viewBox="0 0 16 16"><g color="#fff" transform="translate(0.9,0.9)"><path class="s" d="M1.4 2.4l1.6 4.4 1.600-4.400M5.400 2.400l1.400 4.400 1.200-3.200 1.200 3.200 1.400-4.400M11.400 2.400l1.600 4.400 1.600-4.400" stroke-width="0.9"/><path class="s" d="M3 13.200l1.400-4.600.8 3.400 1.400-3.400.6 4.600M8.600 13.200l1.400-4.600.8 3.400 1.400-3.400.6 4.600" stroke-width="0.9"/></g><g color="#808080"><path class="s" d="M1.4 2.4l1.6 4.4 1.600-4.400M5.400 2.400l1.400 4.400 1.200-3.200 1.200 3.200 1.400-4.400M11.400 2.400l1.600 4.400 1.600-4.400" stroke-width="0.9"/><path class="s" d="M3 13.200l1.400-4.600.8 3.400 1.400-3.400.6 4.600M8.600 13.200l1.400-4.600.8 3.400 1.400-3.400.6 4.600" stroke-width="0.9"/></g></svg>
<svg class="ic" style="left:472.12px;top:39.32px" width="15.36" height="15.36" viewBox="0 0 16 16"><g color="#fff" transform="translate(0.9,0.9)"><path class="s" d="M3.400 12.400l7-9.600M5.400 13.400l7.400-10M7.800 13.600l6.200-8.400M10.400 13.600l4-5.400M12.600 13.800l2-2.600" stroke-width="0.9"/><path class="s" d="M3 12V3.600" stroke-width="1.200"/><path class="f" d="M0.800 5.800l2.200-3.600 2.200 3.600z"/></g><g color="#808080"><path class="s" d="M3.400 12.400l7-9.600M5.400 13.400l7.400-10M7.800 13.600l6.200-8.400M10.400 13.600l4-5.400M12.600 13.800l2-2.600" stroke-width="0.9"/><path class="s" d="M3 12V3.600" stroke-width="1.200"/><path class="f" d="M0.800 5.800l2.200-3.600 2.200 3.600z"/></g></svg>
<svg class="ic" style="left:492.52px;top:39.32px" width="15.36" height="15.36" viewBox="0 0 16 16"><g color="#fff" transform="translate(0.9,0.9)"><path class="s" d="M1.600 9.600l6-8M2.600 12l8-10.800M4.800 13l8-10.800M7.400 13.400l6.400-8.600" stroke-width="0.900"/><path class="s" d="M11.600 8.800v4M9.600 11h4" stroke-width="1.200"/><path class="s" d="M2 2.400l1.600 1.200M3 5.800l1 .8" stroke-width="0.9"/></g><g color="#808080"><path class="s" d="M1.600 9.600l6-8M2.600 12l8-10.800M4.800 13l8-10.800M7.400 13.400l6.400-8.600" stroke-width="0.900"/><path class="s" d="M11.600 8.800v4M9.600 11h4" stroke-width="1.200"/><path class="s" d="M2 2.400l1.600 1.200M3 5.800l1 .8" stroke-width="0.9"/></g></svg>
<svg class="ic" style="left:517.92px;top:39.32px" width="15.36" height="15.36" viewBox="0 0 16 16"><g color="#fff" transform="translate(0.9,0.9)"><path class="s" d="M1.200 11.400h13.600" stroke-width="1.100"/><path class="s" d="M4.400 8.800l-3.200 2.600 3.200 2.600" stroke-width="1.100"/><text class="f" x="8" y="8.600" text-anchor="middle" font-family="Liberation Serif" font-weight="bold" font-size="8.600" stroke="currentColor" stroke-width="0.350">1</text></g><g color="#808080"><path class="s" d="M1.200 11.400h13.600" stroke-width="1.100"/><path class="s" d="M4.400 8.800l-3.200 2.600 3.200 2.600" stroke-width="1.100"/><text class="f" x="8" y="8.600" text-anchor="middle" font-family="Liberation Serif" font-weight="bold" font-size="8.600" stroke="currentColor" stroke-width="0.350">1</text></g></svg>
<svg class="ic" style="left:538.22px;top:39.32px" width="15.36" height="15.36" viewBox="0 0 16 16"><g color="#fff" transform="translate(0.9,0.9)"><path class="s" d="M1.200 11.400h13.600" stroke-width="1.100"/><path class="s" d="M11.600 8.800l3.200 2.600-3.200 2.600" stroke-width="1.100"/><text class="f" x="8" y="8.600" text-anchor="middle" font-family="Liberation Serif" font-weight="bold" font-size="8.600" stroke="currentColor" stroke-width="0.350">1</text></g><g color="#808080"><path class="s" d="M1.200 11.400h13.600" stroke-width="1.100"/><path class="s" d="M11.600 8.800l3.200 2.600-3.200 2.600" stroke-width="1.100"/><text class="f" x="8" y="8.600" text-anchor="middle" font-family="Liberation Serif" font-weight="bold" font-size="8.600" stroke="currentColor" stroke-width="0.350">1</text></g></svg>
<svg class="ic" style="left:564.32px;top:39.32px" width="15.36" height="15.36" viewBox="0 0 16 16"><g color="#fff" transform="translate(0.9,0.9)"><path class="s" d="M1.200 11.400h13.600" stroke-width="1.100"/><path class="s" d="M4.400 8.800l-3.200 2.600 3.200 2.600" stroke-width="1.100"/><text class="f" x="8" y="8.600" text-anchor="middle" font-family="Liberation Serif" font-weight="bold" font-size="8.600" stroke="currentColor" stroke-width="0.350">10</text></g><g color="#808080"><path class="s" d="M1.200 11.400h13.600" stroke-width="1.100"/><path class="s" d="M4.400 8.800l-3.200 2.600 3.200 2.600" stroke-width="1.100"/><text class="f" x="8" y="8.600" text-anchor="middle" font-family="Liberation Serif" font-weight="bold" font-size="8.600" stroke="currentColor" stroke-width="0.350">10</text></g></svg>
<svg class="ic" style="left:584.52px;top:39.32px" width="15.36" height="15.36" viewBox="0 0 16 16"><g color="#fff" transform="translate(0.9,0.9)"><path class="s" d="M1.200 11.400h13.600" stroke-width="1.100"/><path class="s" d="M11.600 8.800l3.200 2.600-3.200 2.600" stroke-width="1.100"/><text class="f" x="8" y="8.600" text-anchor="middle" font-family="Liberation Serif" font-weight="bold" font-size="8.600" stroke="currentColor" stroke-width="0.350">10</text></g><g color="#808080"><path class="s" d="M1.200 11.400h13.600" stroke-width="1.100"/><path class="s" d="M11.600 8.800l3.200 2.600-3.200 2.600" stroke-width="1.100"/><text class="f" x="8" y="8.600" text-anchor="middle" font-family="Liberation Serif" font-weight="bold" font-size="8.600" stroke="currentColor" stroke-width="0.350">10</text></g></svg>
<svg class="ic" style="left:609.52px;top:39.32px" width="15.36" height="15.36" viewBox="0 0 16 16"><g color="#fff" transform="translate(0.9,0.9)"><path class="s" d="M1.200 11.400h13.600" stroke-width="1.100"/><path class="s" d="M4.400 8.800l-3.200 2.600 3.200 2.600" stroke-width="1.100"/><text class="f" x="8" y="8.600" text-anchor="middle" font-family="Liberation Serif" font-weight="bold" font-size="8.600" stroke="currentColor" stroke-width="0.350">100</text></g><g color="#808080"><path class="s" d="M1.200 11.400h13.600" stroke-width="1.100"/><path class="s" d="M4.400 8.800l-3.200 2.600 3.200 2.600" stroke-width="1.100"/><text class="f" x="8" y="8.600" text-anchor="middle" font-family="Liberation Serif" font-weight="bold" font-size="8.600" stroke="currentColor" stroke-width="0.350">100</text></g></svg>
<svg class="ic" style="left:629.72px;top:39.32px" width="15.36" height="15.36" viewBox="0 0 16 16"><g color="#fff" transform="translate(0.9,0.9)"><path class="s" d="M1.200 11.400h13.600" stroke-width="1.100"/><path class="s" d="M11.600 8.800l3.200 2.600-3.200 2.600" stroke-width="1.100"/><text class="f" x="8" y="8.600" text-anchor="middle" font-family="Liberation Serif" font-weight="bold" font-size="8.600" stroke="currentColor" stroke-width="0.350">100</text></g><g color="#808080"><path class="s" d="M1.200 11.400h13.600" stroke-width="1.100"/><path class="s" d="M11.600 8.800l3.200 2.600-3.200 2.600" stroke-width="1.100"/><text class="f" x="8" y="8.600" text-anchor="middle" font-family="Liberation Serif" font-weight="bold" font-size="8.600" stroke="currentColor" stroke-width="0.350">100</text></g></svg>
<svg class="ic" style="left:655.12px;top:39.32px" width="15.36" height="15.36" viewBox="0 0 16 16"><g color="#fff" transform="translate(0.9,0.9)"><path class="s" d="M1.200 11.400h13.600" stroke-width="1.100"/><path class="s" d="M4.400 8.800l-3.200 2.600 3.200 2.600" stroke-width="1.100"/><text class="f" x="8" y="8.600" text-anchor="middle" font-family="Liberation Serif" font-weight="bold" font-size="8.600" stroke="currentColor" stroke-width="0.350">0</text></g><g color="#808080"><path class="s" d="M1.200 11.400h13.600" stroke-width="1.100"/><path class="s" d="M4.400 8.800l-3.200 2.600 3.200 2.600" stroke-width="1.100"/><text class="f" x="8" y="8.600" text-anchor="middle" font-family="Liberation Serif" font-weight="bold" font-size="8.600" stroke="currentColor" stroke-width="0.350">0</text></g></svg>
<svg class="ic" style="left:674.92px;top:39.32px" width="15.36" height="15.36" viewBox="0 0 16 16"><g color="#fff" transform="translate(0.9,0.9)"><path class="s" d="M1.200 11.400h13.600" stroke-width="1.100"/><path class="s" d="M11.600 8.800l3.200 2.600-3.200 2.600" stroke-width="1.100"/><text class="f" x="8" y="8.600" text-anchor="middle" font-family="Liberation Serif" font-weight="bold" font-size="8.600" stroke="currentColor" stroke-width="0.350">0</text></g><g color="#808080"><path class="s" d="M1.200 11.400h13.600" stroke-width="1.100"/><path class="s" d="M11.600 8.800l3.200 2.600-3.200 2.600" stroke-width="1.100"/><text class="f" x="8" y="8.600" text-anchor="middle" font-family="Liberation Serif" font-weight="bold" font-size="8.600" stroke="currentColor" stroke-width="0.350">0</text></g></svg>
<svg class="ic" style="left:700.52px;top:39.32px" width="15.36" height="15.36" viewBox="0 0 16 16"><g color="#fff" transform="translate(0.9,0.9)"><circle class="f" cx="6" cy="5.400" r="3.200"/><circle class="f" cx="4.200" cy="10.400" r="3.400"/><circle class="f" cx="8.600" cy="10.400" r="3.400"/><path class="s" d="M13.400 13.600V3"/><path class="f" d="M11.800 4.600l1.600-2.800 1.600 2.800z"/></g><g color="#808080"><circle class="f" cx="6" cy="5.400" r="3.200"/><circle class="f" cx="4.200" cy="10.400" r="3.400"/><circle class="f" cx="8.600" cy="10.400" r="3.400"/><path class="s" d="M13.400 13.600V3"/><path class="f" d="M11.800 4.600l1.600-2.800 1.600 2.800z"/></g></svg>
<svg class="ic" style="left:720.72px;top:39.32px" width="15.36" height="15.36" viewBox="0 0 16 16"><g color="#fff" transform="translate(0.9,0.9)"><circle class="f" cx="6" cy="5.400" r="3.200"/><circle class="f" cx="4.200" cy="10.400" r="3.400"/><circle class="f" cx="8.600" cy="10.400" r="3.400"/><path class="s" d="M13.400 1.800v10.600"/><path class="f" d="M11.800 11l1.600 2.800 1.600-2.800z"/></g><g color="#808080"><circle class="f" cx="6" cy="5.400" r="3.200"/><circle class="f" cx="4.200" cy="10.400" r="3.400"/><circle class="f" cx="8.600" cy="10.400" r="3.400"/><path class="s" d="M13.400 1.800v10.600"/><path class="f" d="M11.800 11l1.600 2.800 1.600-2.800z"/></g></svg>
<svg class="ic" style="left:746.32px;top:39.32px" width="15.36" height="15.36" viewBox="0 0 16 16"><g color="#fff" transform="translate(0.9,0.9)"><path class="s" d="M1.400 2.200h2.400l-1.600 1.600h1.800l-1.800 1.800h1.800l-1.800 1.800h1.800l-1.600 1.800M5 2.200h2.400l-1.600 1.600h1.800l-1.800 1.800h1.800l-1.800 1.800h1.800l-1.600 1.800" stroke-width="0.8"/><path class="s" d="M2.400 10v2M5.800 10v2" stroke-dasharray="0.8 0.8"/><path class="s" d="M9 3.600l3.400 1.400M9 3.600l.4 2.400" stroke-width="1"/><circle class="s" cx="11.400" cy="11" r="2.400"/><circle class="f" cx="11.400" cy="11" r="1.100"/></g><g color="#808080"><path class="s" d="M1.400 2.200h2.400l-1.600 1.600h1.800l-1.800 1.800h1.800l-1.800 1.800h1.800l-1.600 1.800M5 2.200h2.400l-1.600 1.600h1.800l-1.800 1.800h1.800l-1.800 1.800h1.800l-1.600 1.800" stroke-width="0.8"/><path class="s" d="M2.400 10v2M5.800 10v2" stroke-dasharray="0.8 0.8"/><path class="s" d="M9 3.600l3.400 1.400M9 3.600l.4 2.400" stroke-width="1"/><circle class="s" cx="11.400" cy="11" r="2.400"/><circle class="f" cx="11.400" cy="11" r="1.100"/></g></svg>
<svg class="ic" style="left:766.72px;top:39.32px" width="15.36" height="15.36" viewBox="0 0 16 16"><g color="#fff" transform="translate(0.9,0.9)"><path class="s" d="M1.400 2.200h2.400l-1.600 1.600h1.800l-1.800 1.800h1.800l-1.800 1.800h1.800l-1.600 1.800M5 2.200h2.400l-1.600 1.600h1.800l-1.800 1.800h1.800l-1.800 1.800h1.800l-1.600 1.800" stroke-width="0.8"/><path class="s" d="M2.400 10v2M5.800 10v2" stroke-dasharray="0.8 0.8"/><path class="s" d="M9 3l3.600 2.400M12.600 5.400l-2.400.2M12.600 5.400l-.4-2.200" stroke-width="1"/><circle class="s" cx="11.400" cy="11" r="2.400"/><circle class="f" cx="11.400" cy="11" r="1.100"/></g><g color="#808080"><path class="s" d="M1.400 2.200h2.400l-1.600 1.600h1.800l-1.800 1.800h1.800l-1.800 1.800h1.800l-1.600 1.800M5 2.200h2.400l-1.600 1.600h1.800l-1.800 1.800h1.800l-1.800 1.800h1.800l-1.600 1.800" stroke-width="0.8"/><path class="s" d="M2.400 10v2M5.800 10v2" stroke-dasharray="0.8 0.8"/><path class="s" d="M9 3l3.600 2.400M12.600 5.400l-2.400.2M12.600 5.400l-.4-2.200" stroke-width="1"/><circle class="s" cx="11.400" cy="11" r="2.400"/><circle class="f" cx="11.400" cy="11" r="1.100"/></g></svg>
<svg class="ic" style="left:612.80px;top:65.20px" width="16.00" height="16.00" viewBox="0 0 16 16"><g color="#fff" transform="translate(0.9,0.9)"><path class="f" d="M1.400 5h5l-2.500 2.600zM1.400 7.800h5l-2.500 2.600z"/><path class="s" d="M9.6 2.200l1.500 10.400 1.500-10.400M11.1 3.400v10.400" stroke-width="0.95"/></g><g color="#808080"><path class="f" d="M1.400 5h5l-2.500 2.600zM1.400 7.800h5l-2.500 2.600z"/><path class="s" d="M9.6 2.200l1.500 10.400 1.500-10.400M11.1 3.400v10.400" stroke-width="0.95"/></g></svg>
<svg class="ic" style="left:632.93px;top:65.20px" width="16.00" height="16.00" viewBox="0 0 16 16"><g color="#fff" transform="translate(0.9,0.9)"><path class="s" d="M1.200 4.400h6M1.200 6.200h6" stroke-width="1.100"/><path class="f" d="M1.400 7.600h5.400l-2.700 3z"/><path class="s" d="M9.6 2.200l1.500 10.400 1.500-10.400M11.1 3.400v10.400" stroke-width="0.95"/></g><g color="#808080"><path class="s" d="M1.200 4.400h6M1.200 6.200h6" stroke-width="1.100"/><path class="f" d="M1.400 7.600h5.400l-2.700 3z"/><path class="s" d="M9.6 2.200l1.500 10.400 1.500-10.400M11.1 3.400v10.400" stroke-width="0.95"/></g></svg>
<svg class="ic" style="left:653.06px;top:65.20px" width="16.00" height="16.00" viewBox="0 0 16 16"><g color="#fff" transform="translate(0.9,0.9)"><path class="s" d="M1.400 4.600c0-2.400 3.400-2.400 3.400-.4 0 1.400-2 1-1.600-.2M4.800 4l5.200 6" stroke-width="0.9"/><path class="s" d="M10.4 2.200l1.500 10.400 1.500-10.400M11.9 3.400v10.400" stroke-width="0.95"/></g><g color="#808080"><path class="s" d="M1.400 4.600c0-2.400 3.400-2.400 3.400-.4 0 1.400-2 1-1.600-.2M4.800 4l5.200 6" stroke-width="0.9"/><path class="s" d="M10.4 2.200l1.500 10.400 1.500-10.400M11.9 3.400v10.400" stroke-width="0.95"/></g></svg>
<svg class="ic" style="left:673.19px;top:65.20px" width="16.00" height="16.00" viewBox="0 0 16 16"><g color="#fff" transform="translate(0.9,0.9)"><path class="s" d="M1.400 4.600c0-2.400 3.400-2.400 3.400-.4 0 1.400-2 1-1.600-.2M4.800 4l5.200 6" stroke-width="0.9"/><path class="s" d="M10.4 2.200l1.500 10.400 1.500-10.400M11.9 3.400v10.400" stroke-width="0.95"/></g><g color="#808080"><path class="s" d="M1.400 4.600c0-2.400 3.400-2.400 3.400-.4 0 1.400-2 1-1.600-.2M4.800 4l5.200 6" stroke-width="0.9"/><path class="s" d="M10.4 2.200l1.500 10.400 1.500-10.400M11.9 3.400v10.400" stroke-width="0.95"/></g></svg>
<svg class="ic" style="left:693.32px;top:65.20px" width="16.00" height="16.00" viewBox="0 0 16 16"><g color="#fff" transform="translate(0.9,0.9)"><path class="s" d="M1 10.400h14" stroke-width="1"/><rect class="s" x="5.600" y="2.800" width="4.400" height="6" stroke-width="0.9"/><path class="s" d="M7.800 2.800v11M5.600 5.800h4.400" stroke-width="0.9"/></g><g color="#808080"><path class="s" d="M1 10.400h14" stroke-width="1"/><rect class="s" x="5.600" y="2.800" width="4.400" height="6" stroke-width="0.9"/><path class="s" d="M7.800 2.800v11M5.600 5.800h4.400" stroke-width="0.9"/></g></svg>
<svg class="ic" style="left:713.45px;top:65.20px" width="16.00" height="16.00" viewBox="0 0 16 16"><g color="#fff" transform="translate(0.9,0.9)"><path class="s" d="M1 10.400h14" stroke-width="1"/><path class="s" d="M5.600 2.800v6h4.400v-6" stroke-width="0.9"/><path class="s" d="M7.800 6v7.800M5.600 5.800h4.400" stroke-width="0.9"/></g><g color="#808080"><path class="s" d="M1 10.400h14" stroke-width="1"/><path class="s" d="M5.600 2.800v6h4.400v-6" stroke-width="0.9"/><path class="s" d="M7.800 6v7.800M5.600 5.800h4.400" stroke-width="0.9"/></g></svg>
<svg class="ic" style="left:733.58px;top:65.20px" width="16.00" height="16.00" viewBox="0 0 16 16"><g color="#fff" transform="translate(0.9,0.9)"><path class="s" d="M1 11h14" stroke-width="1"/><path class="s" d="M2.400 3v6.400h3V3M7 3v6.400h2.400M11.400 2.600v11M9.600 3v6.400h3.600V3" stroke-width="0.9"/></g><g color="#808080"><path class="s" d="M1 11h14" stroke-width="1"/><path class="s" d="M2.400 3v6.400h3V3M7 3v6.400h2.400M11.400 2.600v11M9.600 3v6.400h3.600V3" stroke-width="0.9"/></g></svg>
<svg class="ic" style="left:753.71px;top:65.20px" width="16.00" height="16.00" viewBox="0 0 16 16"><g color="#fff" transform="translate(0.9,0.9)"><path class="s" d="M1 12h14" stroke-width="1"/><path class="s" d="M7.400 3l1.800 5.600L11 3M7 3h4.600M9.200 8.600v3" stroke-width="0.9"/><path class="s" d="M2.400 5.600v1.600M1.600 6.400h1.600M4.600 8.400v1.600M3.800 9.200h1.600M13.400 8v1.600" stroke-width="0.8"/></g><g color="#808080"><path class="s" d="M1 12h14" stroke-width="1"/><path class="s" d="M7.400 3l1.800 5.600L11 3M7 3h4.600M9.200 8.600v3" stroke-width="0.9"/><path class="s" d="M2.400 5.600v1.600M1.600 6.400h1.600M4.600 8.400v1.600M3.800 9.200h1.600M13.400 8v1.600" stroke-width="0.8"/></g></svg>
<svg class="ic" style="left:773.84px;top:65.20px" width="16.00" height="16.00" viewBox="0 0 16 16"><g color="#fff" transform="translate(0.9,0.9)"><path class="s" d="M4.400 2.400l-2.800 6 .4 3.400 3.400 1.600 2.400-1.600.4-4.400z" stroke-width="0.9"/><path class="s" d="M2.400 6.600l4 2.400M2 8.600l4 2.400M3.400 4.600l3.600 2.200M5.800 4.400L2.600 11M7.400 6l-3 6.400" stroke-width="0.7"/><path class="s" d="M7.800 5.400c1.200-3.600 6.400-3.400 6.200.6-.2 3-2.600 3.600-2.400 6 .2 1.600 1.800 1.600 2.200.4" stroke-width="1"/></g><g color="#808080"><path class="s" d="M4.400 2.400l-2.800 6 .4 3.400 3.400 1.600 2.400-1.600.4-4.400z" stroke-width="0.9"/><path class="s" d="M2.400 6.600l4 2.400M2 8.600l4 2.400M3.400 4.600l3.600 2.200M5.800 4.400L2.600 11M7.400 6l-3 6.400" stroke-width="0.7"/><path class="s" d="M7.800 5.400c1.200-3.600 6.400-3.400 6.200.6-.2 3-2.600 3.600-2.400 6 .2 1.600 1.800 1.600 2.200.4" stroke-width="1"/></g></svg>
<svg class="ic" style="left:793.97px;top:65.20px" width="16.00" height="16.00" viewBox="0 0 16 16"><g color="#fff" transform="translate(0.9,0.9)"><path class="s" d="M4.400 2.400l-2.800 6 .4 3.400 3.400 1.600 2.400-1.600.4-4.400z" stroke-width="0.9"/><path class="s" d="M2.400 6.600l4 2.400M2 8.600l4 2.400M3.400 4.600l3.600 2.200M5.800 4.400L2.600 11M7.400 6l-3 6.400" stroke-width="0.7"/><path class="s" d="M7.800 5.400c1.200-3.600 6.400-3.400 6.200.6-.2 3-2.600 3.600-2.400 6 .2 1.600 1.800 1.600 2.200.4" stroke-width="1"/></g><g color="#808080"><path class="s" d="M4.400 2.400l-2.800 6 .4 3.400 3.400 1.600 2.400-1.600.4-4.400z" stroke-width="0.9"/><path class="s" d="M2.400 6.600l4 2.400M2 8.600l4 2.400M3.400 4.600l3.600 2.200M5.800 4.400L2.600 11M7.400 6l-3 6.400" stroke-width="0.7"/><path class="s" d="M7.800 5.400c1.200-3.600 6.400-3.400 6.200.6-.2 3-2.600 3.600-2.400 6 .2 1.600 1.800 1.600 2.200.4" stroke-width="1"/></g></svg>
<svg class="ic" style="left:389.20px;top:65.80px" width="16.00" height="16.00" viewBox="0 0 16 16"><rect x="1.6" y="1.6" width="10.6" height="2.6" fill="#10106c"/><rect x="1.6" y="1.6" width="10.6" height="9" fill="none" stroke="#222" stroke-width="1"/><rect x="2.6" y="5" width="2.8" height="6.4" fill="#181818"/><rect x="3.2" y="6" width="1.2" height="1.2" fill="#d0d0d0"/><rect x="3.2" y="8.4" width="1.2" height="1.2" fill="#d0d0d0"/><rect x="6.2" y="5.2" width="3.4" height="2.6" fill="#e8e8e8" stroke="#333" stroke-width="0.8"/><path d="M3.8 11.400v2.600M2.400 12.600l1.400 1.600 1.400-1.600" stroke="#000" stroke-width="1" fill="none"/><rect x="7.400" y="7.400" width="7.200" height="7" fill="#141414"/><rect x="9" y="8" width="4" height="2.600" fill="#a0a0a0"/><rect x="9.400" y="11.800" width="3.400" height="2.400" fill="#585858"/></svg>
<svg class="ic" style="left:409.60px;top:65.80px" width="16.00" height="16.00" viewBox="0 0 16 16"><rect x="8" y="2" width="6.400" height="10.400" fill="#fff" stroke="#333" stroke-width="0.8"/><path d="M9 4.400h4.600M9 10.400h4.600" stroke="#222" stroke-width="1"/><ellipse cx="9.400" cy="4.800" rx="2.400" ry="1.600" fill="#d84868"/><path d="M4 6.400c1-3 3-3.400 5-1.600" fill="none" stroke="#222" stroke-width="1"/><path d="M1.400 13.400V6.600h3l1 1.200h4.200v1.600" fill="#90a040" stroke="#1c2808" stroke-width="1"/><path d="M1.400 13.400l2.400-4.600h8.600l-2.600 4.600z" fill="#6c8424" stroke="#1c2808" stroke-width="1"/></svg>
<svg class="ic" style="left:430.00px;top:65.80px" width="16.00" height="16.00" viewBox="0 0 16 16"><path d="M1 4l2-2v12l-2 1z" fill="#505050"/><rect x="3" y="2" width="11.600" height="12.200" fill="#74742c" stroke="#2a2a0c" stroke-width="0.9"/><rect x="5.200" y="2.600" width="7.200" height="4.400" fill="#a8a850"/><path d="M7.400 3.400v2.400M10 3.400v2.400" stroke="#3a3a10" stroke-width="0.9"/><rect x="4.800" y="9" width="8" height="5" fill="#080808"/><rect x="10.400" y="10.400" width="1.600" height="2.600" fill="#f0f0f0"/></svg>
<svg class="ic" style="left:450.40px;top:65.80px" width="16.00" height="16.00" viewBox="0 0 16 16"><rect x="2" y="2" width="12.400" height="12.400" fill="#0c0c0c" stroke="#707028" stroke-width="1.300"/><circle cx="8.600" cy="6.400" r="3" fill="#e8eef8"/><path d="M6 6.400a2.600 2.600 0 0 1 3.400-2.600c-1.600 1-1.600 3.600.2 4.800-1.800.6-3.600-.4-3.600-2.200z" fill="#2838a0"/><path d="M6.600 13.600v-2.400c0-1.400 3.600-1.400 3.600 0v2.400z" fill="#e0e4ee"/><rect x="11" y="11" width="1.600" height="2.400" fill="#c8c870"/></svg>
<svg class="ic" style="left:149.30px;top:92.30px" width="16.20" height="16.20" viewBox="0 0 18 18"><circle cx="6.4" cy="7.4" r="4.2" fill="none" stroke="#000" stroke-width="1.3"/><path d="M9.37 10.37L14.2 15.2" stroke="#000" stroke-width="2.2" stroke-linecap="round"/><path d="M15.200 2.400v3.600M13.400 4.200h3.600M13.400 8.400h3.600" stroke="#000" stroke-width="1.100"/></svg>
<svg class="ic" style="left:170.40px;top:92.30px" width="16.20" height="16.20" viewBox="0 0 18 18"><path d="M3.600 11.400L1.800 8c-.6-1.200.8-1.800 1.600-.8l1.400 1.800-1.400-5c-.2-1.200 1.200-1.600 1.600-.4l1.200 3.800-.4-4.800c0-1.200 1.600-1.200 1.800 0l.6 4.600.6-4c.2-1.200 1.600-1 1.600.2l-.2 4.400 1.200-2.800c.4-1 1.800-.6 1.400.6l-1.400 4.800-.8 1.600z" fill="#fff" stroke="#000" stroke-width="0.9" stroke-linejoin="round"/><rect x="3.800" y="12" width="9.200" height="2.400" fill="#000"/></svg>
<svg class="ic" style="left:191.50px;top:92.30px" width="16.20" height="16.20" viewBox="0 0 18 18"><circle cx="7.4" cy="7" r="4.6" fill="none" stroke="#000" stroke-width="1.3"/><path d="M10.65 10.25L15.2 14.8" stroke="#000" stroke-width="2.2" stroke-linecap="round"/><path d="M7.400 4.400v5.200M4.800 7h5.200" stroke="#000" stroke-width="1.300"/></svg>
<svg class="ic" style="left:217.90px;top:92.30px" width="16.20" height="16.20" viewBox="0 0 18 18"><circle cx="8.6" cy="6" r="4.4" fill="none" stroke="#000" stroke-width="1.3"/><path d="M11.71 9.11L16 13.4" stroke="#000" stroke-width="2.2" stroke-linecap="round"/><path d="M8.600 3.200v5.600M5.800 6h5.600" stroke="#000" stroke-width="1.700"/><text x="1" y="15.400" font-family="Liberation Sans" font-weight="bold" font-size="5.800" fill="#e03c3c">x2</text></svg>
<svg class="ic" style="left:239.00px;top:92.30px" width="16.20" height="16.20" viewBox="0 0 18 18"><circle cx="8" cy="6" r="4.4" fill="none" stroke="#000" stroke-width="1.3"/><path d="M11.11 9.11L15.6 13.4" stroke="#000" stroke-width="2.2" stroke-linecap="round"/><path d="M5.400 6h5.200" stroke="#000" stroke-width="1.900"/><text x="0.400" y="15.400" font-family="Liberation Sans" font-weight="bold" font-size="5.800" fill="#e03c3c">÷2</text></svg>
<svg class="ic" style="left:260.10px;top:92.30px" width="16.20" height="16.20" viewBox="0 0 18 18"><g color="#fff" transform="translate(0.9,0.9)"><circle cx="7.6" cy="7.4" r="4.6" fill="none" stroke="currentColor" stroke-width="1.0"/><path d="M10.85 10.65L14.8 14.8" stroke="currentColor" stroke-width="1.6" stroke-linecap="round"/><path class="s" d="M5.400 8c.4-2 2.600-2.400 4-1.200M5 6.200l.4 2 1.800-.6" stroke-width="0.9"/></g><g color="#808080"><circle cx="7.6" cy="7.4" r="4.6" fill="none" stroke="currentColor" stroke-width="1.0"/><path d="M10.85 10.65L14.8 14.8" stroke="currentColor" stroke-width="1.6" stroke-linecap="round"/><path class="s" d="M5.400 8c.4-2 2.600-2.400 4-1.200M5 6.200l.4 2 1.800-.6" stroke-width="0.9"/></g></svg>
<svg class="ic" style="left:281.20px;top:92.30px" width="16.20" height="16.20" viewBox="0 0 18 18"><g color="#fff" transform="translate(0.9,0.9)"><circle cx="7.6" cy="7.4" r="4.6" fill="none" stroke="currentColor" stroke-width="1.0"/><path d="M10.85 10.65L14.8 14.8" stroke="currentColor" stroke-width="1.6" stroke-linecap="round"/><path class="s" d="M9.800 8c-.4-2-2.600-2.400-4-1.200M10.200 6.200l-.4 2-1.800-.6" stroke-width="0.9"/></g><g color="#808080"><circle cx="7.6" cy="7.4" r="4.6" fill="none" stroke="currentColor" stroke-width="1.0"/><path d="M10.85 10.65L14.8 14.8" stroke="currentColor" stroke-width="1.6" stroke-linecap="round"/><path class="s" d="M9.800 8c-.4-2-2.600-2.400-4-1.200M10.200 6.200l-.4 2-1.800-.6" stroke-width="0.9"/></g></svg>
<svg class="ic" style="left:302.30px;top:92.30px" width="16.20" height="16.20" viewBox="0 0 18 18"><text x="9" y="16" text-anchor="middle" font-family="Liberation Sans" font-weight="bold" font-size="18.800" fill="#000" textLength="15.400" lengthAdjust="spacingAndGlyphs">1:1</text></svg>
<svg class="ic" style="left:328.70px;top:92.30px" width="16.20" height="16.20" viewBox="0 0 18 18"><circle cx="7.8" cy="7.4" r="5.6" fill="none" stroke="#000" stroke-width="1.3"/><path d="M11.76 11.36L16 15.6" stroke="#000" stroke-width="2.2" stroke-linecap="round"/><circle cx="6.4" cy="6.2" r="2.2" fill="#fff" stroke="#000" stroke-width="0.9"/><path d="M7.96 7.76L10.8 10.6" stroke="#000" stroke-width="1.2" stroke-linecap="round"/></svg>
<svg class="ic" style="left:355.10px;top:92.30px" width="16.20" height="16.20" viewBox="0 0 18 18"><rect x="3.600" y="1.600" width="9.800" height="13.400" fill="#f4f8ff" stroke="#000" stroke-width="1.200"/><circle cx="8.4" cy="6.6" r="2.8" fill="#8ce0e0" stroke="#1c5454" stroke-width="1.0"/><path d="M10.38 8.58L13 11.6" stroke="#1c5454" stroke-width="1.5" stroke-linecap="round"/></svg>
<svg class="ic" style="left:376.20px;top:92.30px" width="16.20" height="16.20" viewBox="0 0 18 18"><path d="M2.400 3.200h13M2.400 3.200l2-1.600M2.400 3.200l2 1.600M15.400 3.200l-2-1.600M15.400 3.200l-2 1.600" stroke="#000" stroke-width="1" fill="none"/><path d="M3.400 15.400V6.600h8.600l2.600 2.600v6.200" fill="#f4f8ff" stroke="#000" stroke-width="1.200"/><circle cx="9" cy="11" r="2.8" fill="#8ce0e0" stroke="#1c5454" stroke-width="1.0"/><path d="M10.98 12.98L13.4 15.6" stroke="#1c5454" stroke-width="1.5" stroke-linecap="round"/></svg>
<svg class="ic" style="left:397.30px;top:92.30px" width="16.20" height="16.20" viewBox="0 0 18 18"><path d="M3 2v13.600M3 2L1.400 4M3 2l1.600 2M3 15.600l-1.600-2M3 15.600l1.600-2" stroke="#000" stroke-width="1" fill="none"/><path d="M6.200 14.800V3h6.400l2.600 2.600v9.200z" fill="#f4f8ff" stroke="#000" stroke-width="1.200"/><circle cx="10.4" cy="8.8" r="2.8" fill="#8ce0e0" stroke="#1c5454" stroke-width="1.0"/><path d="M12.38 10.78L14.8 13.6" stroke="#1c5454" stroke-width="1.5" stroke-linecap="round"/></svg>
<svg class="ic" style="left:5.00px;top:123.60px" width="15.20" height="15.20" viewBox="0 0 16 16"><g color="#fff" transform="translate(0.9,0.9)"><path d="M9.200 1.500c1.300-.9 3.100.2 2.500 1.700L6.800 12.200l-2.800 1.200.4-2.900z" fill="#fff" stroke="currentColor" stroke-width="1"/><path class="s" d="M10.400 3.400L6.400 11" stroke-width="0.6"/><path class="s" d="M4.400 13.600c3.200 1.200 5.800-1.400 10.400.4" stroke-width="1"/></g><g color="#808080"><path d="M9.200 1.500c1.300-.9 3.100.2 2.500 1.700L6.800 12.200l-2.800 1.200.4-2.900z" fill="#fff" stroke="currentColor" stroke-width="1"/><path class="s" d="M10.400 3.400L6.400 11" stroke-width="0.6"/><path class="s" d="M4.400 13.600c3.200 1.200 5.800-1.400 10.400.4" stroke-width="1"/></g></svg>
<svg class="ic" style="left:5.00px;top:142.90px" width="15.20" height="15.20" viewBox="0 0 16 16"><path d="M11.400 1.600c1.300-.7 2.700.5 2 1.800l-3 6.400-2.600-1z" fill="#000"/><path d="M11.800 3.400l-1.400 3.200" stroke="#fff" stroke-width="0.84"/><path d="M9 9.200l-1.400 2.600" stroke="#000" stroke-width="1.09"/><path d="M1.800 8.600c2.400.4 3.800 1.400 4.800 3.400 1.400 1.600 3.800 2 5.800 1.600" fill="none" stroke="#000" stroke-width="0.84"/><circle cx="1.900" cy="8.600" r="1.350" fill="#000"/><circle cx="6.800" cy="12.200" r="1.500" fill="#000"/><circle cx="12.200" cy="13.800" r="1.100" fill="#000"/></svg>
<svg class="ic" style="left:5.00px;top:162.20px" width="15.20" height="15.20" viewBox="0 0 16 16"><g color="#fff" transform="translate(0.9,0.9)"><path d="M9.200 1.500c1.300-.9 3.100.2 2.500 1.700L6.800 12.200l-2.800 1.200.4-2.900z" fill="#fff" stroke="currentColor" stroke-width="1"/><path class="s" d="M10.400 3.400L6.400 11" stroke-width="0.6"/></g><g color="#808080"><path d="M9.200 1.500c1.300-.9 3.100.2 2.500 1.700L6.800 12.200l-2.800 1.200.4-2.900z" fill="#fff" stroke="currentColor" stroke-width="1"/><path class="s" d="M10.400 3.400L6.400 11" stroke-width="0.6"/></g><path d="M6.400 13.200c2.600-2 5.800-2.400 8.600-.6-2.800 1.800-6 1.800-8.600.6z" fill="#686868"/></svg>
<svg class="ic" style="left:5.00px;top:181.50px" width="15.20" height="15.20" viewBox="0 0 16 16"><path d="M2.400 3.800h9.800c1.600 0 1.600 1.400.4 2.200L3.400 11.400h11" fill="none" stroke="#000" stroke-width="1.01"/><path d="M3.800 2.600L2.200 3.800l1.600 1.200M13 10.200l1.600 1.200-1.600 1.200" fill="none" stroke="#000" stroke-width="0.84"/></svg>
<svg class="ic" style="left:5.00px;top:200.80px" width="15.20" height="15.20" viewBox="0 0 16 16"><path d="M8 2.200l6 4.800-2.400 6H4.400L2 7z" fill="#fff" stroke="#000" stroke-width="1.09"/></svg>
<svg class="ic" style="left:5.00px;top:220.10px" width="15.20" height="15.20" viewBox="0 0 16 16"><rect x="2.800" y="2.800" width="10.400" height="10.400" fill="#fff" stroke="#000" stroke-width="1.09"/></svg>
<svg class="ic" style="left:5.00px;top:239.40px" width="15.20" height="15.20" viewBox="0 0 16 16"><path d="M4.400 12.800c-1.600-3.600.2-7 3.400-8 2-.6 3.800-.4 5.400.4" fill="none" stroke="#000" stroke-width="1.01"/><circle cx="4.600" cy="13" r="1.450" fill="#000"/><circle cx="13.400" cy="5.200" r="1.450" fill="#000"/></svg>
<svg class="ic" style="left:5.00px;top:258.70px" width="15.20" height="15.20" viewBox="0 0 16 16"><circle cx="8" cy="8" r="5.600" fill="#fff" stroke="#000" stroke-width="1.09"/></svg>
<svg class="ic" style="left:5.00px;top:278.00px" width="15.20" height="15.20" viewBox="0 0 16 16"><path d="M1.600 11c1.400-5 4.400-6.600 6.600-3.800 2 2.600 4.600 1.200 6.200-3" fill="none" stroke="#000" stroke-width="1.18"/></svg>
<svg class="ic" style="left:5.00px;top:297.30px" width="15.20" height="15.20" viewBox="0 0 16 16"><rect x="1.800" y="3.400" width="12.400" height="9.200" rx="4.600" fill="#fff" stroke="#000" stroke-width="1.18"/></svg>
<svg class="ic" style="left:5.00px;top:316.60px" width="15.20" height="15.20" viewBox="0 0 16 16"><path transform="translate(-1.6 -1.6) scale(1.2)" d="M8.400 8.600c-1.200-.6-.6-2.200.8-2 2 .4 2.200 3 .6 4-2.200 1.400-5-.2-5-2.800 0-3.200 3.400-5 6.200-3.600 3 1.600 3.400 5.600 1 7.800-1.600 1.400-3.800 1.800-5.600 1" fill="none" stroke="#000" stroke-width="1.01"/></svg>
<svg class="ic" style="left:5.00px;top:335.90px" width="15.20" height="15.20" viewBox="0 0 16 16"><path d="M2 6.400l3.400-3.600 3.200 3" fill="none" stroke="#000" stroke-width="1.01"/><path d="M6.600 5.600c3.400-3.400 8.200-.4 6.600 3.400-1 2.400-3.400 3.400-5.600 2.200" fill="none" stroke="#000" stroke-width="1.01"/><path d="M6.200 9.800l1.200 2 2.200-.4" fill="none" stroke="#000" stroke-width="0.92"/></svg>
<svg class="ic" style="left:5.00px;top:355.20px" width="15.20" height="15.20" viewBox="0 0 16 16"><path d="M2.400 11.400l9-9 2.800 2.800-9 9z" fill="#fff" stroke="#000" stroke-width="1.01"/><path d="M4.200 13.200l9-9" stroke="#000" stroke-width="0.67"/><path d="M2 14.400l1-3.200 2.200 2.200z" fill="#000"/></svg>
<svg class="ic" style="left:5.00px;top:374.50px" width="15.20" height="15.20" viewBox="0 0 16 16"><rect x="2.400" y="2.400" width="11.400" height="11.200" fill="#fff" stroke="#000" stroke-width="1.18"/><path d="M6.200 2.400v11.200M10 2.400v11.200M2.400 6.200h11.400M2.400 9.800h11.400" stroke="#000" stroke-width="1.09"/></svg>
<svg class="ic" style="left:5.00px;top:393.80px" width="15.20" height="15.20" viewBox="0 0 16 16"><text x="8" y="13" text-anchor="middle" font-family="Liberation Serif" font-size="13.6" fill="#000" stroke="#000" stroke-width="0.25">A</text></svg>
<div style="left:29.80px;top:179.40px;width:19.80px;height:19.40px;background:#e9e7e3;border:1px solid;border-color:#808080 #ffffff #ffffff #808080;box-sizing:border-box"></div>
<svg class="ic" style="left:32.40px;top:123.60px" width="15.20" height="15.20" viewBox="0 0 16 16"><path d="M4.800 1.200v12.200l2.700-2.700 2.200 4.700 1.900-.9-2.200-4.600h3.700z" fill="#000"/></svg>
<svg class="ic" style="left:32.40px;top:142.90px" width="15.20" height="15.20" viewBox="0 0 16 16"><path d="M3.400 14.400c1-4.800 4.400-9.800 9.800-12" fill="none" stroke="#000" stroke-width="1.100"/><circle cx="6.200" cy="6.600" r="2.300" fill="#10106c"/><path d="M9.600 8.800v5.800l4.800-2.900z" fill="#000"/></svg>
<svg class="ic" style="left:32.40px;top:162.20px" width="15.20" height="15.20" viewBox="0 0 16 16"><rect x="0.800" y="1.600" width="14.600" height="8.600" fill="#d0d0ff" opacity="0.6"/><path d="M1.200 6.800c.6-7 2-7 2.600 0 .2 3 .6 3 .8 0 .6-7 2-7 2.600 0 .2 3 .6 3 .8 0 .6-7 2-7 2.600 0 .2 3 .6 3 .8 0 .6-7 2-7 2.600 0" fill="none" stroke="#1c1cb4" stroke-width="1.500"/><path d="M7.400 9.400l4.800 5.400h-4.800z" fill="#000"/></svg>
<svg class="ic" style="left:32.40px;top:181.50px" width="15.20" height="15.20" viewBox="0 0 16 16"><circle cx="6.6" cy="6.8" r="4.4" fill="none" stroke="#000" stroke-width="1.2"/><path d="M9.71 9.91L14.4 14.6" stroke="#000" stroke-width="2.0" stroke-linecap="round"/></svg>
<svg class="ic" style="left:32.40px;top:200.80px" width="15.20" height="15.20" viewBox="0 0 16 16"><path d="M0.800 5h10.200c0 8-10.200 8-10.200 0z" fill="#a0a8f0" stroke="#18187c" stroke-width="1.100"/><path d="M1.800 7.600h8.200M3 9.800h5.800" stroke="#18187c" stroke-width="0.9"/><rect x="10.800" y="1" width="3.800" height="14" fill="#a8a838" stroke="#3c3c08" stroke-width="0.8"/><path d="M12.800 3.200h1.800M12.800 5.800h1.800M12.800 8.400h1.800M12.800 11h1.800M12.800 13.200h1.800" stroke="#202000" stroke-width="0.8"/></svg>
<svg class="ic" style="left:32.20px;top:261.00px" width="15.20" height="15.20" viewBox="0 0 16 16"><rect x="0.800" y="2" width="14.800" height="12" fill="#dcdcff" opacity="0.7"/><path d="M1.600 4.200h3.200M6.400 4.200h3.200M11.200 4.200h3.200" stroke="#20209c" stroke-width="1.12"/><path d="M8 10c-2-2.800-6.600-3-6.600 0s4.600 2.800 6.600 0c2-2.800 6.600-3 6.600 0s-4.600 2.800-6.600 0z" fill="none" stroke="#20209c" stroke-width="1.12"/></svg>
<svg class="ic" style="left:32.20px;top:280.30px" width="15.20" height="15.20" viewBox="0 0 16 16"><path d="M2.200 3.400l5 1.600 6.600-2.400 .4 5.600-4.400 3.600-6.400 2.400z" fill="#dcdcff" opacity="0.8"/><path d="M2.200 3.400l5 1.600 6.600-2.400.4 5.600-4.400 3.600-6.400 2.400 1-5.400z" fill="none" stroke="#000" stroke-width="0.86" stroke-dasharray="2.400 1"/><circle cx="2.2" cy="3.4" r="1.300" fill="#000"/><circle cx="7.2" cy="5" r="1.300" fill="#000"/><circle cx="13.8" cy="2.6" r="1.300" fill="#000"/><circle cx="14.2" cy="8.2" r="1.300" fill="#000"/><circle cx="9.8" cy="11.8" r="1.300" fill="#000"/><circle cx="3.4" cy="14.2" r="1.300" fill="#000"/><circle cx="4.4" cy="8.8" r="1.300" fill="#000"/></svg>
<svg class="ic" style="left:32.20px;top:299.60px" width="15.20" height="15.20" viewBox="0 0 16 16"><rect x="0.800" y="1" width="14.800" height="14" fill="#dcdcff" opacity="0.7"/><path d="M1.60 14.6V1.4L4.12 14.6V1.4M6.64 14.6V1.4L9.16 14.6V1.4M11.68 14.6V1.4L14.20 14.6V1.4" fill="none" stroke="#20209c" stroke-width="0.99"/><path d="M1 8h14.400" stroke="#e02040" stroke-width="1.03"/></svg>
<svg class="ic" style="left:32.20px;top:318.90px" width="15.20" height="15.20" viewBox="0 0 16 16"><rect x="0.800" y="1" width="14.800" height="14" fill="#dcdcff" opacity="0.7"/><path d="M1.60 14.6V1.4L4.12 14.6V1.4M6.64 14.6V1.4L9.16 14.6V1.4M11.68 14.6V1.4L14.20 14.6V1.4" fill="none" stroke="#20209c" stroke-width="1.12"/></svg>
<svg class="ic" style="left:32.20px;top:338.20px" width="15.20" height="15.20" viewBox="0 0 16 16"><rect x="0.800" y="1" width="14.800" height="14" fill="#dcdcff" opacity="0.7"/><path d="M1.400 14.600L4.800 1.400l1.400 13.200L9.400 1.400l1.400 13.200L14.200 1.400l.6 6" fill="none" stroke="#20209c" stroke-width="1.03"/></svg>
<svg class="ic" style="left:32.20px;top:357.50px" width="15.20" height="15.20" viewBox="0 0 16 16"><rect x="0.800" y="3" width="14.800" height="11" fill="#dcdcff" opacity="0.7"/><path d="M1.400 13h13.600" stroke="#20209c" stroke-width="1.55"/><path d="M2 3.600v9M4.600 3.600v9M7.200 3.600v9M9.800 3.600v9M12.400 3.600v9M14.600 3.600v9" stroke="#20209c" stroke-width="0.95"/></svg>
<svg class="ic" style="left:32.20px;top:376.80px" width="15.20" height="15.20" viewBox="0 0 16 16"><path d="M2 12.400c.4-4 2.400-6 4.800-6.400.6-1.600 2-1.600 2.600 0 2.400.4 4.400 2.800 5 6.400" fill="none" stroke="#20209c" stroke-width="0.95"/></svg>
<svg class="ic" style="left:32.20px;top:396.10px" width="15.20" height="15.20" viewBox="0 0 16 16"><rect x="0.800" y="2" width="14.800" height="13" fill="#dcdcff" opacity="0.7"/><path d="M1 14h14.400" stroke="#20209c" stroke-width="0.95"/><path d="M2.400 14V2.800h3.400V14M7.200 14V5.400h1.600V14M10.400 14V2.800h3.400V14" fill="none" stroke="#20209c" stroke-width="0.95"/></svg>
<svg class="ic" style="left:32.20px;top:415.40px" width="15.20" height="15.20" viewBox="0 0 16 16"><rect x="0.800" y="2" width="14.800" height="12" fill="#dcdcff" opacity="0.7"/><path d="M1.400 7c3.400-4.400 10-4.400 13.400 0M1.400 10.400c3.400-4.400 10-4.400 13.400 0M1.400 13.800c3.400-4.400 10-4.400 13.400 0" fill="none" stroke="#20209c" stroke-width="1.12"/><path d="M1.400 7v1.600M14.800 7v1.600M1.400 10.400V12M14.800 10.400V12" stroke="#20209c" stroke-width="0.86"/></svg>
<svg class="ic" style="left:32.20px;top:434.70px" width="15.20" height="15.20" viewBox="0 0 16 16"><rect x="0.800" y="1" width="14.800" height="14" fill="#dcdcff" opacity="0.7"/><path d="M2 3h12M2.400 6.600c3-2 8-2 11.400 0M2.400 10.400c3-2 8-2 11.400 0M2.400 14c3-2 8-2 11.400 0" fill="none" stroke="#20209c" stroke-width="1.03" stroke-dasharray="2.600 0.800"/><path d="M2 4.800h12" stroke="#20209c" stroke-width="0.86"/></svg>
<svg class="ic" style="left:32.20px;top:454.00px" width="15.20" height="15.20" viewBox="0 0 16 16"><rect x="0.800" y="3" width="14.800" height="10" fill="#dcdcff" opacity="0.7"/><path d="M1 8.400h14" stroke="#20209c" stroke-width="0.77"/><ellipse cx="3" cy="5.800" rx="1.500" ry="2.100" fill="none" stroke="#20209c" stroke-width="0.95"/><ellipse cx="3" cy="10.600" rx="1.700" ry="2.300" fill="none" stroke="#20209c" stroke-width="0.95"/><ellipse cx="8" cy="5.800" rx="1.500" ry="2.100" fill="none" stroke="#20209c" stroke-width="0.95"/><ellipse cx="8" cy="10.600" rx="1.700" ry="2.300" fill="none" stroke="#20209c" stroke-width="0.95"/><ellipse cx="13" cy="5.800" rx="1.500" ry="2.100" fill="none" stroke="#20209c" stroke-width="0.95"/><ellipse cx="13" cy="10.600" rx="1.700" ry="2.300" fill="none" stroke="#20209c" stroke-width="0.95"/></svg>
<svg class="ic" style="left:32.20px;top:473.30px" width="15.20" height="15.20" viewBox="0 0 16 16"><rect x="0.800" y="1" width="14.800" height="14.4" fill="#dcdcff" opacity="0.7"/><path d="M3 1.600L1.400 6l1.600 4-1.600 4.600M5.400 1.600l-1.200 4 2 3-2 3 1.200 3.400M8 1.400v3l2.400 2.200L8 9l2.400 2.400L8 14.600M12.800 1.600l-1.400 3 2.400 2-2.400 2.400 2.400 2.600-1 3.200M14.800 3v10" fill="none" stroke="#20209c" stroke-width="1.03"/><path d="M5.400 5.400h6M5.400 11h6" stroke="#20209c" stroke-width="0.86"/></svg>
<div style="left:848.00px;top:125.20px;width:20.40px;height:18.60px;background:#e9e7e3;border:1px solid;border-color:#808080 #ffffff #ffffff #808080;box-sizing:border-box"></div>
<div style="left:848.00px;top:183.00px;width:20.40px;height:18.60px;background:#e9e7e3;border:1px solid;border-color:#808080 #ffffff #ffffff #808080;box-sizing:border-box"></div>
<svg class="ic" style="left:850.80px;top:127.00px" width="15.20" height="15.20" viewBox="0 0 16 16"><path d="M2.400 13.400V6.800c0-6.400 11.600-6.400 11.600 0v6.600z" fill="none" stroke="#000" stroke-width="0.99"/><circle cx="2.4" cy="6.8" r="1.55" fill="#000"/><circle cx="8.2" cy="2" r="1.55" fill="#000"/><circle cx="14" cy="6.8" r="1.55" fill="#000"/><circle cx="14" cy="13.4" r="1.55" fill="#000"/><circle cx="2.4" cy="13.4" r="1.55" fill="#000"/></svg>
<svg class="ic" style="left:850.80px;top:146.30px" width="15.20" height="15.20" viewBox="0 0 16 16"><path d="M2 8.400c1.600-6 8-6.600 12-5.400M2 13.600c2-5.600 7.600-6.200 12-5M2 8.400v5.200M14 3v10.600M2 13.600c3-3.400 8-3.800 12 0" fill="none" stroke="#000" stroke-width="0.99"/><circle cx="14" cy="3" r="1.55" fill="#000"/><circle cx="14" cy="8.4" r="1.55" fill="#000"/><circle cx="14" cy="13.4" r="1.55" fill="#000"/><circle cx="8" cy="5.6" r="1.55" fill="#000"/><circle cx="2" cy="8.4" r="1.55" fill="#000"/></svg>
<svg class="ic" style="left:850.80px;top:165.60px" width="15.20" height="15.20" viewBox="0 0 16 16"><path d="M2 14.400V8.400c1-3.600 3.400-5 6-5.400M8 3h6v8.400H7.400V3M2 8.400l5.400 3" fill="none" stroke="#000" stroke-width="0.99"/><circle cx="8" cy="3" r="1.45" fill="#000"/><circle cx="14" cy="3" r="1.45" fill="#000"/><circle cx="14" cy="7.2" r="1.45" fill="#000"/><circle cx="14" cy="11.4" r="1.45" fill="#000"/><circle cx="7.4" cy="11.4" r="1.45" fill="#000"/><circle cx="7.4" cy="7.2" r="1.45" fill="#000"/><circle cx="2" cy="8.4" r="1.45" fill="#000"/><circle cx="2" cy="14.4" r="1.45" fill="#000"/></svg>
<svg class="ic" style="left:850.80px;top:184.90px" width="15.20" height="15.20" viewBox="0 0 16 16"><rect x="3.800" y="1.600" width="8.800" height="13" fill="#9c1010"/><path d="M5.400 6.600V3h3.400c1.800 0 1.800 2.200 0 2.200H5.600M8 5.400l2.600 1.400" fill="none" stroke="#fff" stroke-width="1"/><path d="M5 9h2.400M8.400 9h2.800M5 11h2.800M8.600 11h2.400M5.400 13h5.400" stroke="#fff" stroke-width="1" opacity="0.9"/><path d="M10.800 2.600v3" stroke="#fff" stroke-width="0.9"/></svg>
<svg class="ic" style="left:850.80px;top:204.20px" width="15.20" height="15.20" viewBox="0 0 16 16"><path d="M1.600 3.400c.4 4.400 1.800 7 3.600 7s3.200-2.600 3.600-7" fill="none" stroke="#20206c" stroke-width="1.500"/><circle cx="1.6" cy="3.2" r="1.250" fill="#484868"/><circle cx="8.8" cy="3.2" r="1.250" fill="#484868"/><path d="M10.400 3.200l1.400 2 1.800-2.400.4 3-1.200 1.200 1.800 1.400.6 4.400h-6.200l.6-4.600 1.200-1.200-1-1.400z" fill="#f4f020"/><path d="M10.800 6.400l2.400.4M10 10h4" stroke="#fcfcc0" stroke-width="0.8"/></svg>
<svg class="ic" style="left:850.80px;top:223.50px" width="15.20" height="15.20" viewBox="0 0 16 16"><path d="M2.600 2.600c3.200.8 4.600 2.600 4.200 4.600-1.600 1-3 3-4 6" fill="none" stroke="#20206c" stroke-width="1.500"/><circle cx="2.6" cy="2.6" r="1.250" fill="#484868"/><circle cx="2.6" cy="13.2" r="1.250" fill="#484868"/><path d="M10.400 3.200l1.400 2 1.800-2.400.4 3-1.200 1.200 1.800 1.400.6 4.400h-6.200l.6-4.600 1.200-1.200-1-1.400z" fill="#f4f020"/><path d="M10.800 6.400l2.400.4M10 10h4" stroke="#fcfcc0" stroke-width="0.8"/></svg>
<svg class="ic" style="left:850.80px;top:242.80px" width="15.20" height="15.20" viewBox="0 0 16 16"><path d="M9.800 1.600l1.600 2.200 1.600-2 .6 3-1 1.400 1.800 1.800.4 4.200H9.200l.4-4.400z" fill="#f4f020"/><circle cx="4.600" cy="4.400" r="1.800" fill="#101010"/><path d="M2.400 13V8.600c0-1.800 4.400-1.800 4.400 0l2.400-2.400" fill="none" stroke="#101010" stroke-width="1.200"/><path d="M2.600 8.600h4v4.200h-4z" fill="#20a080"/><path d="M1.600 14.400h5.600" stroke="#188060" stroke-width="1.500"/><path d="M8.600 13.600h5M12 12l2 1.600-2 1.600" fill="none" stroke="#000" stroke-width="1"/></svg>
<svg class="ic" style="left:850.80px;top:314.40px" width="15.20" height="15.20" viewBox="0 0 16 16"><g color="#fff" transform="translate(0.9,0.9)"><path class="s" d="M6 1.600h7.400v10.600M4.800 2.800h7.400v10.600M3.400 4h7.600v10.600H3.400z" stroke-width="0.9"/><circle class="s" cx="6.600" cy="9" r="3.200" stroke-width="0.9"/><path class="s" d="M4 7l5.400 4M3.600 9.600l6-1.200M5.400 6l2.600 6M2 6.600l2.400 1.400" stroke-width="0.7"/></g><g color="#808080"><path class="s" d="M6 1.600h7.400v10.600M4.800 2.800h7.400v10.600M3.400 4h7.600v10.600H3.400z" stroke-width="0.9"/><circle class="s" cx="6.600" cy="9" r="3.200" stroke-width="0.9"/><path class="s" d="M4 7l5.400 4M3.600 9.600l6-1.200M5.400 6l2.600 6M2 6.600l2.400 1.400" stroke-width="0.7"/></g></svg>
<svg class="ic" style="left:850.80px;top:333.70px" width="15.20" height="15.20" viewBox="0 0 16 16"><g color="#fff" transform="translate(0.9,0.9)"><path class="s" d="M5 7l2-4.600h5.800L11 7" stroke-width="0.9"/><path class="s" d="M1.800 9l2.400-2h8.600l1.600 2v3l-1.600 2H3.400l-1.600-2z" stroke-width="0.9"/><path class="s" d="M2 9.200h12.400M3 11.400h10.400M7 4h4M6.400 5.400h4" stroke-width="0.8"/></g><g color="#808080"><path class="s" d="M5 7l2-4.600h5.800L11 7" stroke-width="0.9"/><path class="s" d="M1.800 9l2.400-2h8.600l1.600 2v3l-1.600 2H3.400l-1.600-2z" stroke-width="0.9"/><path class="s" d="M2 9.200h12.400M3 11.400h10.400M7 4h4M6.400 5.400h4" stroke-width="0.8"/></g></svg>
<svg class="ic" style="left:850.80px;top:353.00px" width="15.20" height="15.20" viewBox="0 0 16 16"><g color="#fff" transform="translate(0.9,0.9)"><path class="s" d="M13.600 2.200L5.400 10.400M14 2.600l-8 8.200" stroke-width="1"/><path class="s" d="M3.400 7.400l5.200 5.200M2 14l3-3" stroke-width="1.200"/></g><g color="#808080"><path class="s" d="M13.600 2.200L5.400 10.400M14 2.600l-8 8.200" stroke-width="1"/><path class="s" d="M3.400 7.400l5.200 5.200M2 14l3-3" stroke-width="1.200"/></g></svg>
<svg class="ic" style="left:850.80px;top:372.30px" width="15.20" height="15.20" viewBox="0 0 16 16"><g color="#fff" transform="translate(0.9,0.9)"><path class="s" d="M3 7.400h10.200v7H3z" stroke-width="0.9"/><path class="s" d="M4.800 7.400V5.800c0-4 6.600-4 6.600 0v1.600" stroke-width="0.9"/><path class="s" d="M3 9.200h10.200" stroke-width="0.7"/></g><g color="#808080"><path class="s" d="M3 7.400h10.200v7H3z" stroke-width="0.9"/><path class="s" d="M4.800 7.400V5.800c0-4 6.600-4 6.600 0v1.600" stroke-width="0.9"/><path class="s" d="M3 9.200h10.200" stroke-width="0.7"/></g></svg>
<svg class="ic" style="left:850.80px;top:391.60px" width="15.20" height="15.20" viewBox="0 0 16 16"><g color="#fff" transform="translate(0.9,0.9)"><path class="s" d="M3 7.400h10.200v7H3z" stroke-width="0.9"/><path class="s" d="M4.800 7.400V5.800c0-4 6.600-4 6.600 0v1.600" stroke-width="0.9"/><path class="s" d="M3 9.200h10.200" stroke-width="0.7"/><path class="f" d="M4 14l3.200-4 2 2.200 1.400-1.400 2 3.200z"/></g><g color="#808080"><path class="s" d="M3 7.400h10.200v7H3z" stroke-width="0.9"/><path class="s" d="M4.800 7.400V5.800c0-4 6.600-4 6.600 0v1.600" stroke-width="0.9"/><path class="s" d="M3 9.200h10.200" stroke-width="0.7"/><path class="f" d="M4 14l3.200-4 2 2.200 1.400-1.400 2 3.200z"/></g></svg>
<svg class="ic" style="left:850.80px;top:410.90px" width="15.20" height="15.20" viewBox="0 0 16 16"><g color="#fff" transform="translate(0.9,0.9)"><path class="s" d="M5 7l2-4.600h5.800L11 7" stroke-width="0.9"/><path class="s" d="M1.800 9l2.400-2h8.600l1.600 2v3l-1.600 2H3.400l-1.600-2z" stroke-width="0.9"/><path class="s" d="M2 9.200h12.400M3 11.400h10.400M7 4h4M6.400 5.400h4" stroke-width="0.8"/></g><g color="#808080"><path class="s" d="M5 7l2-4.600h5.800L11 7" stroke-width="0.9"/><path class="s" d="M1.800 9l2.400-2h8.600l1.600 2v3l-1.600 2H3.400l-1.600-2z" stroke-width="0.9"/><path class="s" d="M2 9.200h12.400M3 11.400h10.400M7 4h4M6.400 5.400h4" stroke-width="0.8"/></g></svg>
<svg class="ic" style="left:850.80px;top:430.20px" width="15.20" height="15.20" viewBox="0 0 16 16"><g color="#fff" transform="translate(0.9,0.9)"><path class="s" d="M3 7.800h10.200v6.600H3z" stroke-width="0.9"/><path class="s" d="M3 7.800l3.400-3.600 6.800 2M6.400 4.200l.6 2.200" stroke-width="0.9"/><path class="s" d="M3 9.600h10.200" stroke-width="0.7"/></g><g color="#808080"><path class="s" d="M3 7.800h10.200v6.600H3z" stroke-width="0.9"/><path class="s" d="M3 7.800l3.400-3.600 6.800 2M6.400 4.200l.6 2.200" stroke-width="0.9"/><path class="s" d="M3 9.600h10.200" stroke-width="0.7"/></g></svg>
<svg class="ic" style="left:850.80px;top:449.50px" width="15.20" height="15.20" viewBox="0 0 16 16"><rect x="1.600" y="1.200" width="13.200" height="13.800" fill="#14145c" stroke="#202020" stroke-width="0.8"/><path d="M2.400 2.400h5.200v4c-2 0-3.200 1.200-3.200 3.200h-2z" fill="#e8ecff"/><path d="M9.600 3.600h4M12.200 5v9M5 11.400c1.600-2.400 4-2.400 5 0v2.800H5z" stroke="#f0f0ff" stroke-width="1.200" fill="#e0e4ff"/><rect x="6.400" y="9" width="2.400" height="2" fill="#14145c"/></svg>
<svg class="ic" style="left:850.80px;top:468.80px" width="15.20" height="15.20" viewBox="0 0 16 16"><rect x="1.400" y="1.200" width="13.400" height="13.800" fill="none" stroke="#000" stroke-width="1.100" stroke-dasharray="1.400 1.200"/><path d="M5.400 7l1.800-4h5l-1.600 4z" fill="#fff" stroke="#000" stroke-width="0.9"/><path d="M2.800 9l2-2h7.400l1.400 2v2.600l-1.400 1.800H4.600l-1.800-1.800z" fill="#c8c8c8" stroke="#000" stroke-width="1"/><path d="M3 9.200h10.400M4 11.400h8.600" stroke="#000" stroke-width="1.200"/></svg>
<svg class="ic" style="left:850.80px;top:488.10px" width="15.20" height="15.20" viewBox="0 0 16 16"><rect x="1.400" y="1.200" width="13.400" height="13.800" fill="none" stroke="#000" stroke-width="1.100" stroke-dasharray="1.400 1.200"/><path d="M4.400 12.400l7.400-8.600 1.400 1.200-7.400 8.600-2 .8z" fill="#fff" stroke="#000" stroke-width="0.9"/><path d="M3.800 14.400l.6-2 1.400 1.200z" fill="#000"/></svg>
<svg class="ic" style="left:850.80px;top:507.40px" width="15.20" height="15.20" viewBox="0 0 16 16"><rect x="1.400" y="1.200" width="13.400" height="13.800" fill="none" stroke="#000" stroke-width="1.100" stroke-dasharray="1.400 1.200"/><path d="M4.400 7.400h7.400v6H4.400z" fill="#fff" stroke="#000" stroke-width="1.100"/><path d="M5.800 7.400V6c0-3 4.600-3 4.600 0v1.400" fill="none" stroke="#000" stroke-width="1"/><path d="M4.400 9h7.400" stroke="#000" stroke-width="0.8"/></svg>
</div>
</body></html>
